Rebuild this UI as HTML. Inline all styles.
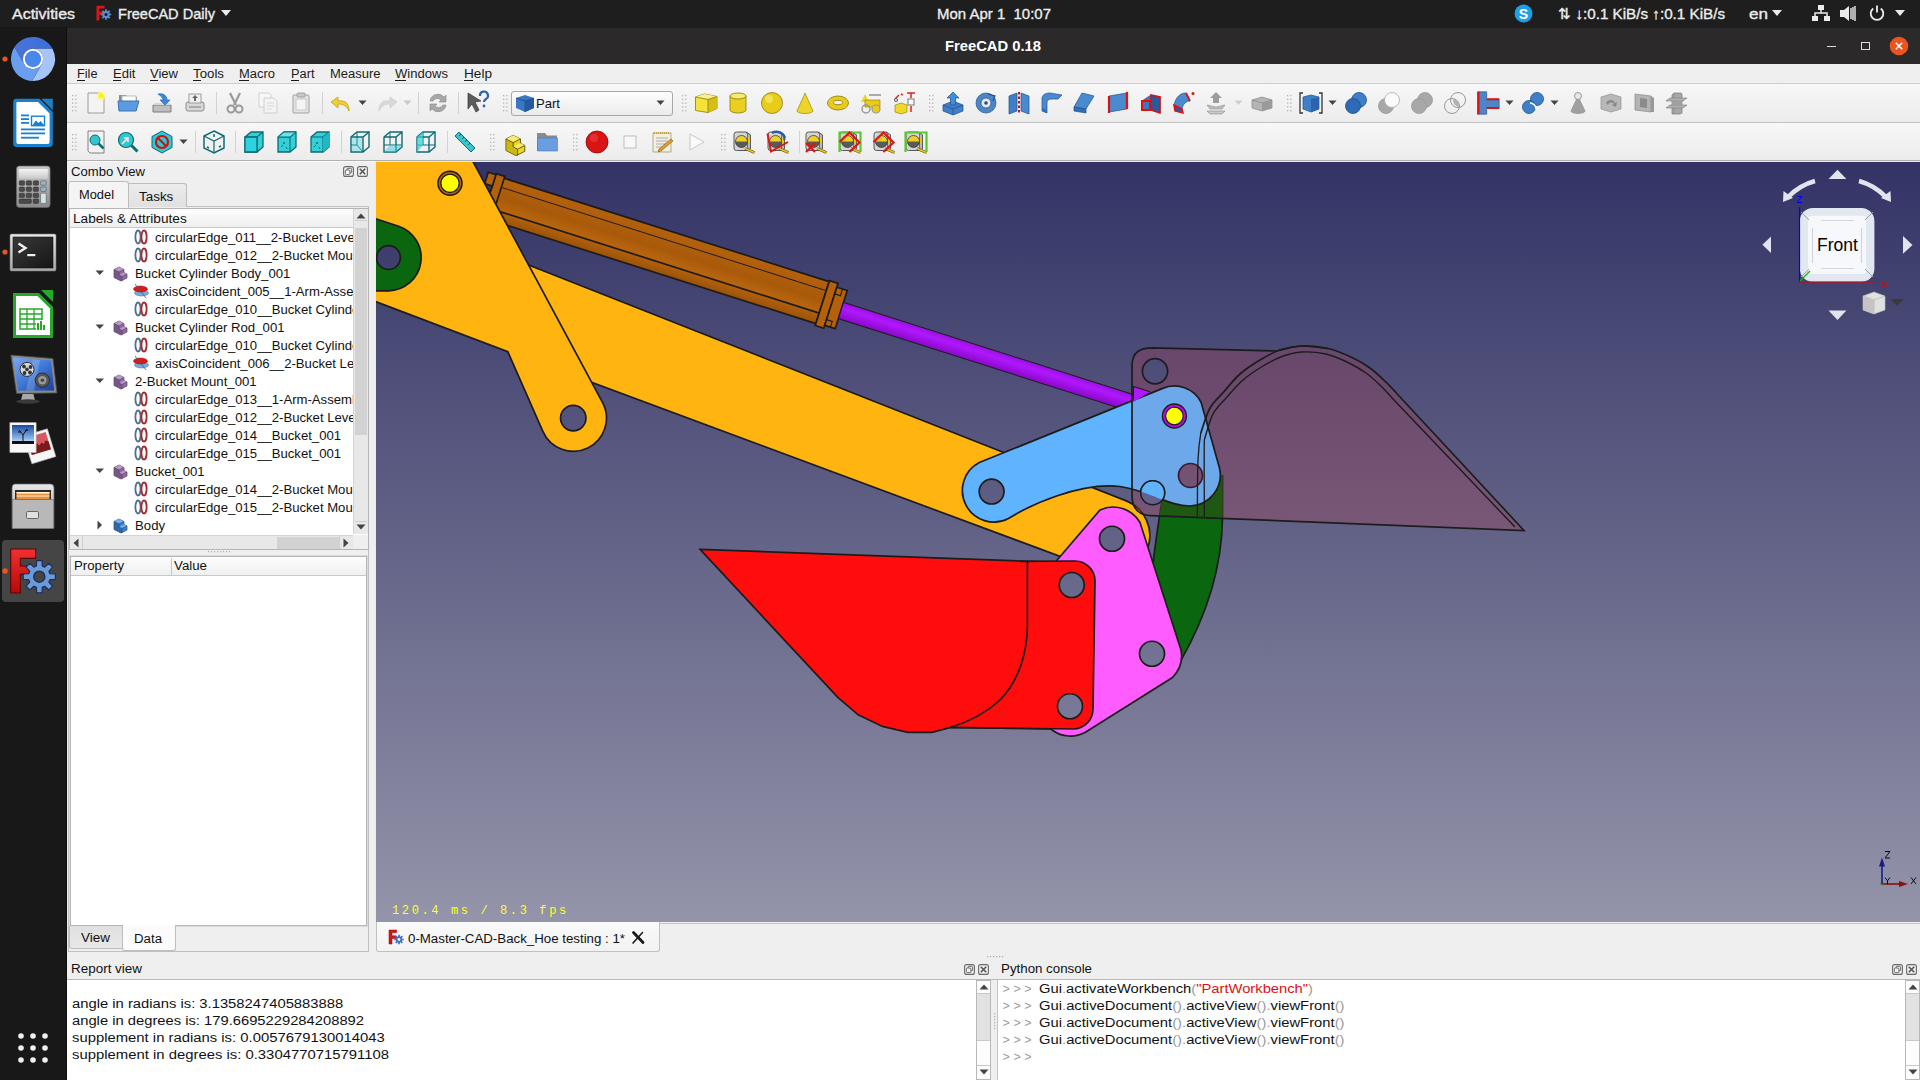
<!DOCTYPE html>
<html><head><meta charset="utf-8">
<style>
html,body{margin:0;padding:0;}
body{width:1920px;height:1080px;overflow:hidden;position:relative;background:#1b1b1b;font-family:"Liberation Sans", sans-serif;}
.t{position:absolute;white-space:pre;line-height:1;transform-origin:0 0;}
.r{position:absolute;}
svg{position:absolute;overflow:visible;}
</style></head><body>

<div class="r" style="left:0px;top:0px;width:1920px;height:28px;background:#1e1e1e;"></div>
<div class="r" style="left:0px;top:27px;width:66px;height:1053px;background:#181818;"></div>
<div class="r" style="left:66px;top:27px;width:1px;height:1053px;background:#0e0e0e;"></div>
<div class="r" style="left:67px;top:28px;width:1853px;height:36px;background:#2b292a;"></div>
<div class="r" style="left:67px;top:64px;width:1853px;height:1016px;background:#efefef;"></div>
<div class="t" id="f0" style="left:12.00px;top:6.30px;font-size:15px;color:#ececec;transform:scaleX(1.0644);-webkit-text-stroke:0.35px #ececec;">Activities</div>
<svg style="left:95px;top:5px;" width="18" height="18" viewBox="0 0 18 18"><path d="M1.5 0.7h8v2.8H4.3v3.2h4v2.8h-4V15.5H1.5z" fill="#d81818"/><polygon points="16.23,8.63 16.23,10.37 14.57,10.48 14.21,11.33 15.31,12.58 14.08,13.81 12.83,12.71 11.98,13.07 11.87,14.73 10.13,14.73 10.02,13.07 9.17,12.71 7.92,13.81 6.69,12.58 7.79,11.33 7.43,10.48 5.77,10.37 5.77,8.63 7.43,8.52 7.79,7.67 6.69,6.42 7.92,5.19 9.17,6.29 10.02,5.93 10.13,4.27 11.87,4.27 11.98,5.93 12.83,6.29 14.08,5.19 15.31,6.42 14.21,7.67 14.57,8.52" fill="#5a8ad0"/><circle cx="11" cy="9.5" r="1.60" fill="#1e1e1e"/></svg>
<div class="t" id="f1" style="left:118.00px;top:6.30px;font-size:15px;color:#ececec;transform:scaleX(0.9697);-webkit-text-stroke:0.35px #ececec;">FreeCAD Daily</div>
<svg style="left:221px;top:10px;" width="11" height="7" viewBox="0 0 11 7"><path d="M0 0h10L5 6z" fill="#ececec"/></svg>
<div class="t" id="f2" style="left:937.00px;top:6.30px;font-size:15px;color:#ececec;transform:scaleX(0.9978);-webkit-text-stroke:0.35px #ececec;">Mon Apr 1  10:07</div>
<svg style="left:1514px;top:4px;" width="19" height="19" viewBox="0 0 19 19"><circle cx="9.5" cy="9.5" r="9" fill="#1ea0e6"/><text x="9.5" y="15" font-family="Liberation Sans" font-weight="bold" font-size="14" fill="#fff" text-anchor="middle">S</text></svg>
<div class="t" id="f3" style="left:1558.00px;top:6.30px;font-size:15px;color:#ececec;transform:scaleX(1.0138);-webkit-text-stroke:0.35px #ececec;">⇅ ↓:0.1 KiB/s ↑:0.1 KiB/s</div>
<div class="t" id="f4" style="left:1749.00px;top:6.30px;font-size:15px;color:#ececec;transform:scaleX(1.1386);-webkit-text-stroke:0.35px #ececec;">en</div>
<svg style="left:1772px;top:10px;" width="11" height="7" viewBox="0 0 11 7"><path d="M0 0h10L5 6z" fill="#ececec"/></svg>
<svg style="left:1812px;top:5px;" width="18" height="17" viewBox="0 0 18 17"><rect x="6" y="0" width="6" height="5" fill="#ececec"/><rect x="0" y="11" width="6" height="5" fill="#ececec"/><rect x="12" y="11" width="6" height="5" fill="#ececec"/><path d="M9 5v3M3 11V8h12v3" stroke="#ececec" stroke-width="1.5" fill="none"/></svg>
<svg style="left:1840px;top:5px;" width="17" height="17" viewBox="0 0 17 17"><path d="M0 5h4l5-4v15l-5-4H0z" fill="#ececec"/><path d="M11 3v11M13 2v13M15 1v15" stroke="#ececec" stroke-width="1.4"/></svg>
<svg style="left:1869px;top:5px;" width="16" height="16" viewBox="0 0 16 16"><path d="M4.2 3.5A6.3 6.3 0 1 0 11.8 3.5" fill="none" stroke="#ececec" stroke-width="1.8"/><path d="M8 0.5v7" stroke="#ececec" stroke-width="1.8"/></svg>
<svg style="left:1895px;top:10px;" width="11" height="7" viewBox="0 0 11 7"><path d="M0 0h10L5 6z" fill="#ececec"/></svg>
<div class="t" id="f5" style="left:945.00px;top:39.03px;font-size:14.5px;color:#ffffff;font-weight:bold;transform:scaleX(1.0181);">FreeCAD 0.18</div>
<div class="r" style="left:1827px;top:45.5px;width:9px;height:1.5px;background:#dcdcdc;"></div>
<div class="r" style="left:1861px;top:42px;width:7px;height:6px;border:1.5px solid #dcdcdc"></div>
<svg style="left:1889px;top:36px;" width="20" height="20" viewBox="0 0 20 20"><circle cx="10" cy="10" r="9.3" fill="#e95420"/><path d="M6.8 6.8l6.4 6.4M13.2 6.8l-6.4 6.4" stroke="#fff" stroke-width="1.5"/></svg>
<svg style="left:9px;top:35px;" width="48" height="48" viewBox="0 0 48 48"><defs><linearGradient id="chtop" x1="0" y1="0" x2="1" y2="0"><stop offset="0" stop-color="#4a74d8"/><stop offset="1" stop-color="#3a6fd8"/></linearGradient></defs>
<path d="M24 13.8L43.49 13.8A22 22 0 0 0 5.42 12.22L15.17 29.1A10.2 10.2 0 0 1 24 13.8Z" fill="url(#chtop)"/>
<path d="M43.49 13.8A22 22 0 0 1 23.08 45.98L32.83 29.1A10.2 10.2 0 0 0 24 13.8Z" fill="#a6c4f7"/>
<path d="M5.42 12.22A22 22 0 0 0 23.08 45.98L32.83 29.1A10.2 10.2 0 0 1 15.17 29.1Z" fill="#6a9ef0"/>
<circle cx="24" cy="24" r="10.2" fill="#fff"/><circle cx="24" cy="24" r="8.2" fill="#4787ee"/></svg>
<svg style="left:2px;top:56px;" width="6" height="6" viewBox="0 0 6 6"><circle cx="3" cy="3" r="2.6" fill="#e95420"/></svg>
<svg style="left:2px;top:249px;" width="6" height="6" viewBox="0 0 6 6"><circle cx="3" cy="3" r="2.6" fill="#e95420"/></svg>
<svg style="left:12px;top:98px;" width="42" height="50" viewBox="0 0 42 50"><path d="M4 0.8H27.5L40.8 14.1V45.5Q40.8 49.1 37.2 49.1H4.8Q1.2 49.1 1.2 45.5V4.4Q1.2 0.8 4 0.8z" fill="#1b80cc"/>
<path d="M5 4H26L37.6 15.6V44Q37.6 46 35.6 46H6Q4.4 46 4.4 44V5.6Q4.4 4 5 4z" fill="#fff"/>
<path d="M29.3 0.8H40.8V12.2z" fill="#1b80cc"/>
<rect x="9" y="16.5" width="8" height="1.8" fill="#1b80cc"/><rect x="9" y="20.2" width="8" height="1.8" fill="#1b80cc"/><rect x="9" y="24" width="8" height="1.8" fill="#1b80cc"/>
<rect x="19.5" y="18.2" width="13" height="9.5" fill="none" stroke="#1b80cc" stroke-width="1.4"/><path d="M20.5 27l3.5-4.5 2.5 2.5 2-2 3.5 4z" fill="#1b80cc"/>
<rect x="9" y="30.5" width="24" height="1.8" fill="#1b80cc"/><rect x="9" y="34.5" width="24" height="1.8" fill="#1b80cc"/><rect x="9" y="38.8" width="18" height="1.8" fill="#1b80cc"/></svg>
<svg style="left:16px;top:165px;" width="35" height="43" viewBox="0 0 35 43"><defs><linearGradient id="cbody" x1="0" y1="0" x2="0" y2="1"><stop offset="0" stop-color="#c8c8c8"/><stop offset="1" stop-color="#8a8a8a"/></linearGradient><linearGradient id="cscr" x1="0" y1="0" x2="0" y2="1"><stop offset="0" stop-color="#f4f4f4"/><stop offset="1" stop-color="#c8c8c8"/></linearGradient></defs>
<rect x="0.5" y="1" width="33.6" height="41.5" rx="3" fill="url(#cbody)" stroke="#666" stroke-width="0.7"/>
<rect x="2.8" y="4" width="29" height="9.8" rx="1" fill="url(#cscr)"/><rect x="3.2" y="15.8" width="5.4" height="4.4" rx="1" fill="#4a4a4a" stroke="#222" stroke-width="0.4"/><rect x="10.2" y="15.8" width="5.4" height="4.4" rx="1" fill="#4a4a4a" stroke="#222" stroke-width="0.4"/><rect x="17.2" y="15.8" width="5.4" height="4.4" rx="1" fill="#4a4a4a" stroke="#222" stroke-width="0.4"/><rect x="3.2" y="22" width="5.4" height="4.4" rx="1" fill="#4a4a4a" stroke="#222" stroke-width="0.4"/><rect x="10.2" y="22" width="5.4" height="4.4" rx="1" fill="#4a4a4a" stroke="#222" stroke-width="0.4"/><rect x="17.2" y="22" width="5.4" height="4.4" rx="1" fill="#4a4a4a" stroke="#222" stroke-width="0.4"/><rect x="3.2" y="28.2" width="5.4" height="4.4" rx="1" fill="#4a4a4a" stroke="#222" stroke-width="0.4"/><rect x="10.2" y="28.2" width="5.4" height="4.4" rx="1" fill="#4a4a4a" stroke="#222" stroke-width="0.4"/><rect x="17.2" y="28.2" width="5.4" height="4.4" rx="1" fill="#4a4a4a" stroke="#222" stroke-width="0.4"/><rect x="3.2" y="34" width="12.2" height="4.4" rx="1" fill="#4a4a4a" stroke="#222" stroke-width="0.4"/><rect x="17.2" y="34" width="5.4" height="4.4" rx="1" fill="#4a4a4a" stroke="#222" stroke-width="0.4"/><rect x="24.6" y="15.8" width="5.6" height="4.4" rx="1" fill="#9ab4c4" stroke="#333" stroke-width="0.4"/><rect x="24.6" y="22" width="5.6" height="4.4" rx="1" fill="#9ab4c4" stroke="#333" stroke-width="0.4"/><rect x="24.6" y="28.2" width="5.6" height="10.2" rx="1" fill="#d4e2ea" stroke="#333" stroke-width="0.4"/></svg>
<svg style="left:9px;top:233px;" width="48" height="39" viewBox="0 0 48 39"><defs><linearGradient id="tfr" x1="0" y1="0" x2="0" y2="1"><stop offset="0" stop-color="#e8e8e8"/><stop offset="1" stop-color="#a8a8a8"/></linearGradient><linearGradient id="tin" x1="0" y1="0" x2="1" y2="1"><stop offset="0" stop-color="#3a3a3a"/><stop offset="1" stop-color="#151515"/></linearGradient></defs>
<rect x="1" y="1" width="46" height="37" rx="1.5" fill="url(#tfr)" stroke="#777" stroke-width="0.6"/><rect x="4" y="4" width="40" height="31" fill="url(#tin)" stroke="#111" stroke-width="0.6"/>
<path d="M9.5 10.5l7 4.5-7 4.5" fill="none" stroke="#f0f0f0" stroke-width="2.4"/><rect x="18.3" y="21" width="8" height="2.2" fill="#f0f0f0"/></svg>
<svg style="left:12px;top:290px;" width="42" height="49" viewBox="0 0 42 49"><path d="M1 3h26l14 14v31H1z" fill="#25a929"/><path d="M4 6h21.5L38 18.5V45H4z" fill="#fff"/>
<path d="M29 0h12v12z" fill="#25a929"/>
<rect x="8" y="19" width="22" height="20" fill="none" stroke="#25a929" stroke-width="1.5"/>
<path d="M8 24h22M8 29h22M8 34h22M15 19v20M22 19v20" stroke="#25a929" stroke-width="1.3"/>
<rect x="24" y="30" width="9" height="11" fill="#fff"/><rect x="25" y="33" width="2" height="7" fill="#25a929"/><rect x="28" y="31" width="2" height="9" fill="#25a929"/><rect x="31" y="35" width="2" height="5" fill="#25a929"/></svg>
<svg style="left:0px;top:345px;" width="67" height="65" viewBox="0 0 67 65"><defs><linearGradient id="mscr" x1="0" y1="0" x2="1" y2="1"><stop offset="0" stop-color="#7aa8f0"/><stop offset="0.5" stop-color="#3f78d8"/><stop offset="1" stop-color="#1a3f9a"/></linearGradient></defs>
<path d="M10.8 10L53 13.5 57 48 16.5 48.5z" fill="#8a8a8a" stroke="#444" stroke-width="0.8"/>
<path d="M13.2 12.6L51 15.6 54.2 45.5 18 45.8z" fill="url(#mscr)"/>
<path d="M33 14.5L40 15 34 45.5 26 45.6z" fill="#ffffff" opacity="0.18"/>
<circle cx="27" cy="24.4" r="7" fill="#d8d8d8" stroke="#333" stroke-width="1"/><circle cx="27" cy="24.4" r="1.8" fill="#333"/>
<circle cx="24" cy="21.5" r="1.9" fill="#333"/><circle cx="30.5" cy="22" r="1.9" fill="#333"/><circle cx="24.5" cy="28" r="1.9" fill="#333"/><circle cx="30" cy="27.5" r="1.9" fill="#333"/>
<circle cx="42.4" cy="35.2" r="7.2" fill="#555" stroke="#222" stroke-width="0.8"/><circle cx="42.4" cy="35.2" r="4.2" fill="#9a9a9a"/><circle cx="42.4" cy="35.2" r="1.8" fill="#444"/>
<path d="M22.6 49h10.8l1.5 6H21z" fill="#a8a8a8"/><ellipse cx="28" cy="56.5" rx="12" ry="2.2" fill="#3a3a3a"/></svg>
<svg style="left:0px;top:415px;" width="67" height="60" viewBox="0 0 67 60"><defs><linearGradient id="sky" x1="0" y1="0" x2="0" y2="1"><stop offset="0" stop-color="#1a4aa0"/><stop offset="0.7" stop-color="#8ab4e8"/><stop offset="1" stop-color="#e8f0ff"/></linearGradient></defs>
<g transform="translate(-2 4) rotate(-17 41 27)"><rect x="29" y="13" width="25" height="29" fill="#f6f6f6" stroke="#bbb" stroke-width="0.6"/><rect x="31.5" y="15.5" width="20" height="18" fill="#d65a62"/><path d="M31.5 33.5v-7l3-1 2 2 3-4 2 3 3-2 2 2 2-3 3 2v8z" fill="#7a1a1a"/></g>
<rect x="9.9" y="7.7" width="26.2" height="29.8" fill="#f8f8f8" stroke="#bbb" stroke-width="0.6"/><rect x="12" y="10" width="22" height="19" fill="url(#sky)"/><rect x="12" y="26" width="22" height="3" fill="#111"/>
<path d="M23 27v-7M23 20l-4-5M23 20l4-6M21 17l-3 0M25 16l3-1" stroke="#111" stroke-width="1" fill="none"/></svg>
<svg style="left:0px;top:480px;" width="67" height="52" viewBox="0 0 67 52"><defs><linearGradient id="cab" x1="0" y1="0" x2="0" y2="1"><stop offset="0" stop-color="#e8e8e8"/><stop offset="1" stop-color="#9a9a9a"/></linearGradient></defs>
<path d="M12 8Q12 4 15 4H50.5Q54 4 54 8V48H12z" fill="url(#cab)" stroke="#6a6a6a" stroke-width="0.7"/>
<rect x="15" y="10" width="36" height="10" fill="#2a2a2a"/>
<rect x="16.5" y="12" width="33" height="7" fill="#e89040"/><rect x="16.5" y="12" width="33" height="1.6" fill="#fff3d0"/><rect x="16.5" y="15.5" width="33" height="1" fill="#fff3d0"/>
<rect x="12.5" y="19.5" width="41" height="29" fill="#b8b8b8" stroke="#777" stroke-width="0.7"/>
<rect x="26.5" y="31.5" width="12" height="7" rx="1.2" fill="#e0e0e0" stroke="#666" stroke-width="1"/></svg>
<div class="r" style="left:2px;top:540px;width:62px;height:62px;background:#454545;border-radius:4px"></div>
<svg style="left:0px;top:530px;" width="67" height="80" viewBox="0 0 67 80"><defs><linearGradient id="fr" x1="0" y1="0" x2="0" y2="1"><stop offset="0" stop-color="#f03030"/><stop offset="1" stop-color="#b80808"/></linearGradient></defs><path d="M10.7 19H35.6V28.4H20.4V36H29.3V44.4H20.4V63H10.7z" fill="url(#fr)" stroke="#5a0404" stroke-width="1.1"/><polygon points="55.38,44.02 55.38,49.38 49.91,49.60 48.85,52.15 52.56,56.18 48.78,59.96 44.75,56.25 42.20,57.31 41.98,62.78 36.62,62.78 36.40,57.31 33.85,56.25 29.82,59.96 26.04,56.18 29.75,52.15 28.69,49.60 23.22,49.38 23.22,44.02 28.69,43.80 29.75,41.25 26.04,37.22 29.82,33.44 33.85,37.15 36.40,36.09 36.62,30.62 41.98,30.62 42.20,36.09 44.75,37.15 48.78,33.44 52.56,37.22 48.85,41.25 49.91,43.80" fill="#6a9ad8" stroke="#1a2a5a" stroke-width="1.1" stroke-linejoin="round"/><circle cx="39.3" cy="46.7" r="5.6" fill="#454545" stroke="#1a2a5a" stroke-width="1.3"/></svg>
<svg style="left:2px;top:568px;" width="6" height="6" viewBox="0 0 6 6"><circle cx="3" cy="3" r="2.8" fill="#e95420"/></svg>
<svg style="left:18px;top:1033px;" width="6" height="6" viewBox="0 0 6 6"><circle cx="3" cy="3" r="2.8" fill="#f0f0f0"/></svg>
<svg style="left:30px;top:1033px;" width="6" height="6" viewBox="0 0 6 6"><circle cx="3" cy="3" r="2.8" fill="#f0f0f0"/></svg>
<svg style="left:42px;top:1033px;" width="6" height="6" viewBox="0 0 6 6"><circle cx="3" cy="3" r="2.8" fill="#f0f0f0"/></svg>
<svg style="left:18px;top:1045px;" width="6" height="6" viewBox="0 0 6 6"><circle cx="3" cy="3" r="2.8" fill="#f0f0f0"/></svg>
<svg style="left:30px;top:1045px;" width="6" height="6" viewBox="0 0 6 6"><circle cx="3" cy="3" r="2.8" fill="#f0f0f0"/></svg>
<svg style="left:42px;top:1045px;" width="6" height="6" viewBox="0 0 6 6"><circle cx="3" cy="3" r="2.8" fill="#f0f0f0"/></svg>
<svg style="left:18px;top:1057px;" width="6" height="6" viewBox="0 0 6 6"><circle cx="3" cy="3" r="2.8" fill="#f0f0f0"/></svg>
<svg style="left:30px;top:1057px;" width="6" height="6" viewBox="0 0 6 6"><circle cx="3" cy="3" r="2.8" fill="#f0f0f0"/></svg>
<svg style="left:42px;top:1057px;" width="6" height="6" viewBox="0 0 6 6"><circle cx="3" cy="3" r="2.8" fill="#f0f0f0"/></svg>
<div class="r" style="left:67px;top:64px;width:1853px;height:20px;background:#efefef;"></div>
<div class="t" id="f6" style="left:77.00px;top:67.92px;font-size:12.5px;color:#1a1a1a;transform:scaleX(1.0171);">File</div>
<div class="t" id="f7" style="left:112.50px;top:67.92px;font-size:12.5px;color:#1a1a1a;transform:scaleX(1.0442);">Edit</div>
<div class="t" id="f8" style="left:150.00px;top:67.92px;font-size:12.5px;color:#1a1a1a;transform:scaleX(1.0419);">View</div>
<div class="t" id="f9" style="left:193.00px;top:67.92px;font-size:12.5px;color:#1a1a1a;transform:scaleX(1.0621);">Tools</div>
<div class="t" id="f10" style="left:239.25px;top:67.92px;font-size:12.5px;color:#1a1a1a;transform:scaleX(1.0364);">Macro</div>
<div class="t" id="f11" style="left:290.50px;top:67.92px;font-size:12.5px;color:#1a1a1a;transform:scaleX(1.0245);">Part</div>
<div class="t" id="f12" style="left:329.50px;top:67.92px;font-size:12.5px;color:#1a1a1a;transform:scaleX(1.0382);">Measure</div>
<div class="t" id="f13" style="left:395.00px;top:67.92px;font-size:12.5px;color:#1a1a1a;transform:scaleX(1.0450);">Windows</div>
<div class="t" id="f14" style="left:463.75px;top:67.92px;font-size:12.5px;color:#1a1a1a;transform:scaleX(1.0887);">Help</div>
<div class="r" style="left:77px;top:80px;width:8px;height:1px;background:#1a1a1a;"></div>
<div class="r" style="left:112.5px;top:80px;width:8px;height:1px;background:#1a1a1a;"></div>
<div class="r" style="left:150px;top:80px;width:8px;height:1px;background:#1a1a1a;"></div>
<div class="r" style="left:193px;top:80px;width:8px;height:1px;background:#1a1a1a;"></div>
<div class="r" style="left:239.25px;top:80px;width:10px;height:1px;background:#1a1a1a;"></div>
<div class="r" style="left:290.5px;top:80px;width:8px;height:1px;background:#1a1a1a;"></div>
<div class="r" style="left:395px;top:80px;width:11px;height:1px;background:#1a1a1a;"></div>
<div class="r" style="left:463.75px;top:80px;width:9px;height:1px;background:#1a1a1a;"></div>
<div class="r" style="left:67px;top:84px;width:1853px;height:38px;background:linear-gradient(#f7f7f7,#ececec)"></div>
<div class="r" style="left:67px;top:122px;width:1853px;height:1px;background:#c4c4c4;"></div>
<div class="r" style="left:67px;top:83px;width:1853px;height:1px;background:#cdcdcd;"></div>
<div class="r" style="left:67px;top:123px;width:1853px;height:37px;background:linear-gradient(#f7f7f7,#ececec)"></div>
<div class="r" style="left:67px;top:160px;width:1853px;height:1px;background:#b0b0b0;"></div>
<div class="r" style="left:67px;top:161px;width:1853px;height:1px;background:#fbfbfb;"></div>
<svg style="left:72px;top:94.75px;" width="6" height="18" viewBox="0 0 6 18"><rect x="0.0" y="0.00" width="1.3" height="1.3" fill="#b4b4b4"/><rect x="3.2" y="0.00" width="1.3" height="1.3" fill="#b4b4b4"/><rect x="0.0" y="3.75" width="1.3" height="1.3" fill="#b4b4b4"/><rect x="3.2" y="3.75" width="1.3" height="1.3" fill="#b4b4b4"/><rect x="0.0" y="7.50" width="1.3" height="1.3" fill="#b4b4b4"/><rect x="3.2" y="7.50" width="1.3" height="1.3" fill="#b4b4b4"/><rect x="0.0" y="11.25" width="1.3" height="1.3" fill="#b4b4b4"/><rect x="3.2" y="11.25" width="1.3" height="1.3" fill="#b4b4b4"/><rect x="0.0" y="15.00" width="1.3" height="1.3" fill="#b4b4b4"/><rect x="3.2" y="15.00" width="1.3" height="1.3" fill="#b4b4b4"/></svg>
<svg style="left:502.5px;top:94.75px;" width="6" height="18" viewBox="0 0 6 18"><rect x="0.0" y="0.00" width="1.3" height="1.3" fill="#b4b4b4"/><rect x="3.2" y="0.00" width="1.3" height="1.3" fill="#b4b4b4"/><rect x="0.0" y="3.75" width="1.3" height="1.3" fill="#b4b4b4"/><rect x="3.2" y="3.75" width="1.3" height="1.3" fill="#b4b4b4"/><rect x="0.0" y="7.50" width="1.3" height="1.3" fill="#b4b4b4"/><rect x="3.2" y="7.50" width="1.3" height="1.3" fill="#b4b4b4"/><rect x="0.0" y="11.25" width="1.3" height="1.3" fill="#b4b4b4"/><rect x="3.2" y="11.25" width="1.3" height="1.3" fill="#b4b4b4"/><rect x="0.0" y="15.00" width="1.3" height="1.3" fill="#b4b4b4"/><rect x="3.2" y="15.00" width="1.3" height="1.3" fill="#b4b4b4"/></svg>
<svg style="left:682px;top:94.75px;" width="6" height="18" viewBox="0 0 6 18"><rect x="0.0" y="0.00" width="1.3" height="1.3" fill="#b4b4b4"/><rect x="3.2" y="0.00" width="1.3" height="1.3" fill="#b4b4b4"/><rect x="0.0" y="3.75" width="1.3" height="1.3" fill="#b4b4b4"/><rect x="3.2" y="3.75" width="1.3" height="1.3" fill="#b4b4b4"/><rect x="0.0" y="7.50" width="1.3" height="1.3" fill="#b4b4b4"/><rect x="3.2" y="7.50" width="1.3" height="1.3" fill="#b4b4b4"/><rect x="0.0" y="11.25" width="1.3" height="1.3" fill="#b4b4b4"/><rect x="3.2" y="11.25" width="1.3" height="1.3" fill="#b4b4b4"/><rect x="0.0" y="15.00" width="1.3" height="1.3" fill="#b4b4b4"/><rect x="3.2" y="15.00" width="1.3" height="1.3" fill="#b4b4b4"/></svg>
<svg style="left:928.5px;top:94.75px;" width="6" height="18" viewBox="0 0 6 18"><rect x="0.0" y="0.00" width="1.3" height="1.3" fill="#b4b4b4"/><rect x="3.2" y="0.00" width="1.3" height="1.3" fill="#b4b4b4"/><rect x="0.0" y="3.75" width="1.3" height="1.3" fill="#b4b4b4"/><rect x="3.2" y="3.75" width="1.3" height="1.3" fill="#b4b4b4"/><rect x="0.0" y="7.50" width="1.3" height="1.3" fill="#b4b4b4"/><rect x="3.2" y="7.50" width="1.3" height="1.3" fill="#b4b4b4"/><rect x="0.0" y="11.25" width="1.3" height="1.3" fill="#b4b4b4"/><rect x="3.2" y="11.25" width="1.3" height="1.3" fill="#b4b4b4"/><rect x="0.0" y="15.00" width="1.3" height="1.3" fill="#b4b4b4"/><rect x="3.2" y="15.00" width="1.3" height="1.3" fill="#b4b4b4"/></svg>
<svg style="left:1286.75px;top:94.75px;" width="6" height="18" viewBox="0 0 6 18"><rect x="0.0" y="0.00" width="1.3" height="1.3" fill="#b4b4b4"/><rect x="3.2" y="0.00" width="1.3" height="1.3" fill="#b4b4b4"/><rect x="0.0" y="3.75" width="1.3" height="1.3" fill="#b4b4b4"/><rect x="3.2" y="3.75" width="1.3" height="1.3" fill="#b4b4b4"/><rect x="0.0" y="7.50" width="1.3" height="1.3" fill="#b4b4b4"/><rect x="3.2" y="7.50" width="1.3" height="1.3" fill="#b4b4b4"/><rect x="0.0" y="11.25" width="1.3" height="1.3" fill="#b4b4b4"/><rect x="3.2" y="11.25" width="1.3" height="1.3" fill="#b4b4b4"/><rect x="0.0" y="15.00" width="1.3" height="1.3" fill="#b4b4b4"/><rect x="3.2" y="15.00" width="1.3" height="1.3" fill="#b4b4b4"/></svg>
<div class="r" style="left:215.75px;top:91.75px;width:1px;height:22px;background:#d2d2d2;"></div>
<div class="r" style="left:322px;top:91.75px;width:1px;height:22px;background:#d2d2d2;"></div>
<div class="r" style="left:418px;top:91.75px;width:1px;height:22px;background:#d2d2d2;"></div>
<div class="r" style="left:458px;top:91.75px;width:1px;height:22px;background:#d2d2d2;"></div>
<svg style="left:72px;top:133.5px;" width="6" height="18" viewBox="0 0 6 18"><rect x="0.0" y="0.00" width="1.3" height="1.3" fill="#b4b4b4"/><rect x="3.2" y="0.00" width="1.3" height="1.3" fill="#b4b4b4"/><rect x="0.0" y="3.75" width="1.3" height="1.3" fill="#b4b4b4"/><rect x="3.2" y="3.75" width="1.3" height="1.3" fill="#b4b4b4"/><rect x="0.0" y="7.50" width="1.3" height="1.3" fill="#b4b4b4"/><rect x="3.2" y="7.50" width="1.3" height="1.3" fill="#b4b4b4"/><rect x="0.0" y="11.25" width="1.3" height="1.3" fill="#b4b4b4"/><rect x="3.2" y="11.25" width="1.3" height="1.3" fill="#b4b4b4"/><rect x="0.0" y="15.00" width="1.3" height="1.3" fill="#b4b4b4"/><rect x="3.2" y="15.00" width="1.3" height="1.3" fill="#b4b4b4"/></svg>
<svg style="left:490px;top:133.5px;" width="6" height="18" viewBox="0 0 6 18"><rect x="0.0" y="0.00" width="1.3" height="1.3" fill="#b4b4b4"/><rect x="3.2" y="0.00" width="1.3" height="1.3" fill="#b4b4b4"/><rect x="0.0" y="3.75" width="1.3" height="1.3" fill="#b4b4b4"/><rect x="3.2" y="3.75" width="1.3" height="1.3" fill="#b4b4b4"/><rect x="0.0" y="7.50" width="1.3" height="1.3" fill="#b4b4b4"/><rect x="3.2" y="7.50" width="1.3" height="1.3" fill="#b4b4b4"/><rect x="0.0" y="11.25" width="1.3" height="1.3" fill="#b4b4b4"/><rect x="3.2" y="11.25" width="1.3" height="1.3" fill="#b4b4b4"/><rect x="0.0" y="15.00" width="1.3" height="1.3" fill="#b4b4b4"/><rect x="3.2" y="15.00" width="1.3" height="1.3" fill="#b4b4b4"/></svg>
<svg style="left:572.5px;top:133.5px;" width="6" height="18" viewBox="0 0 6 18"><rect x="0.0" y="0.00" width="1.3" height="1.3" fill="#b4b4b4"/><rect x="3.2" y="0.00" width="1.3" height="1.3" fill="#b4b4b4"/><rect x="0.0" y="3.75" width="1.3" height="1.3" fill="#b4b4b4"/><rect x="3.2" y="3.75" width="1.3" height="1.3" fill="#b4b4b4"/><rect x="0.0" y="7.50" width="1.3" height="1.3" fill="#b4b4b4"/><rect x="3.2" y="7.50" width="1.3" height="1.3" fill="#b4b4b4"/><rect x="0.0" y="11.25" width="1.3" height="1.3" fill="#b4b4b4"/><rect x="3.2" y="11.25" width="1.3" height="1.3" fill="#b4b4b4"/><rect x="0.0" y="15.00" width="1.3" height="1.3" fill="#b4b4b4"/><rect x="3.2" y="15.00" width="1.3" height="1.3" fill="#b4b4b4"/></svg>
<svg style="left:720.5px;top:133.5px;" width="6" height="18" viewBox="0 0 6 18"><rect x="0.0" y="0.00" width="1.3" height="1.3" fill="#b4b4b4"/><rect x="3.2" y="0.00" width="1.3" height="1.3" fill="#b4b4b4"/><rect x="0.0" y="3.75" width="1.3" height="1.3" fill="#b4b4b4"/><rect x="3.2" y="3.75" width="1.3" height="1.3" fill="#b4b4b4"/><rect x="0.0" y="7.50" width="1.3" height="1.3" fill="#b4b4b4"/><rect x="3.2" y="7.50" width="1.3" height="1.3" fill="#b4b4b4"/><rect x="0.0" y="11.25" width="1.3" height="1.3" fill="#b4b4b4"/><rect x="3.2" y="11.25" width="1.3" height="1.3" fill="#b4b4b4"/><rect x="0.0" y="15.00" width="1.3" height="1.3" fill="#b4b4b4"/><rect x="3.2" y="15.00" width="1.3" height="1.3" fill="#b4b4b4"/></svg>
<div class="r" style="left:194.5px;top:130.5px;width:1px;height:22px;background:#d2d2d2;"></div>
<div class="r" style="left:234.5px;top:130.5px;width:1px;height:22px;background:#d2d2d2;"></div>
<div class="r" style="left:341px;top:130.5px;width:1px;height:22px;background:#d2d2d2;"></div>
<div class="r" style="left:446.5px;top:130.5px;width:1px;height:22px;background:#d2d2d2;"></div>
<div class="r" style="left:798.75px;top:130.5px;width:1px;height:22px;background:#d2d2d2;"></div>
<svg style="left:83.75px;top:90.75px;" width="24" height="24" viewBox="0 0 24 24"><path d="M4 2h13l3 3v17H4z" fill="#f4f4f4" stroke="#9a9a9a"/><circle cx="17" cy="5" r="4.5" fill="#ffff60" opacity="0.7"/><circle cx="17" cy="5" r="2.5" fill="#ffef20"/></svg>
<svg style="left:117.0px;top:90.75px;" width="24" height="24" viewBox="0 0 24 24"><path d="M2 4h7l2 2h9v14H2z" fill="#8c8c8c"/><rect x="5" y="5" width="14" height="10" fill="#fff" stroke="#bbb"/><path d="M1 10h21l-3 10H2z" fill="#5b9be0" stroke="#3a72b8"/></svg>
<svg style="left:150.0px;top:90.75px;" width="24" height="24" viewBox="0 0 24 24"><path d="M3 14h18v7H3z" fill="#bfbfbf" stroke="#7c7c7c"/><path d="M5 12h14l2 2H3z" fill="#d6d6d6"/><path d="M8 3c6-1 9 2 9 6h3l-5 5-5-5h3c0-2-2-4-5-6z" fill="#3a86d8" stroke="#1d5aa8" stroke-width="0.6"/></svg>
<svg style="left:183.0px;top:90.75px;" width="24" height="24" viewBox="0 0 24 24"><rect x="3" y="11" width="18" height="9" rx="2" fill="#d8d8d8" stroke="#8c8c8c"/><rect x="6" y="3" width="12" height="9" fill="#f0f0f0" stroke="#9c9c9c"/><path d="M12 4l3 3h-2v3h-2V7H9z" fill="#666"/><rect x="6" y="15" width="12" height="2" fill="#aaa"/></svg>
<svg style="left:223.0px;top:90.75px;" width="24" height="24" viewBox="0 0 24 24"><path d="M7 2l6 12M17 2l-6 12" stroke="#9a9a9a" stroke-width="2.2"/><circle cx="8" cy="18" r="3.5" fill="none" stroke="#9a9a9a" stroke-width="2"/><circle cx="16" cy="18" r="3.5" fill="none" stroke="#9a9a9a" stroke-width="2"/></svg>
<svg style="left:255.5px;top:90.75px;" width="24" height="24" viewBox="0 0 24 24"><path d="M3 2h10l2 2v12H3z" fill="#f7f7f7" stroke="#d0d0d0"/><path d="M8 7h10l3 3v12H8z" fill="#f3f3f3" stroke="#cfcfcf"/><path d="M11 12h7M11 15h7M11 18h5" stroke="#dadada"/></svg>
<svg style="left:288.75px;top:90.75px;" width="24" height="24" viewBox="0 0 24 24"><rect x="4" y="4" width="16" height="18" rx="1" fill="#e4e4e4" stroke="#a0a0a0"/><rect x="8" y="2" width="8" height="4" rx="1" fill="#c8c8c8" stroke="#a0a0a0"/><rect x="7" y="8" width="10" height="11" fill="#f5f5f5" stroke="#c8c8c8"/></svg>
<svg style="left:328.75px;top:90.75px;" width="24" height="24" viewBox="0 0 24 24"><path d="M20 20c0-8-4-11-11-10V6L2 11l7 6v-4c5 0 9 2 11 7z" fill="#f0d030" stroke="#c8a010" stroke-width="0.8"/></svg>
<svg style="left:358px;top:99.75px;" width="10" height="6" viewBox="0 0 10 6"><path d="M0.5 0.5h8L4.5 5z" fill="#444"/></svg>
<svg style="left:374.5px;top:90.75px;" width="24" height="24" viewBox="0 0 24 24"><path d="M4 20c0-8 4-11 11-10V6l7 5-7 6v-4c-5 0-9 2-11 7z" fill="#d8d8d8" stroke="#cfcfcf" stroke-width="0.8"/></svg>
<svg style="left:403px;top:99.75px;" width="10" height="6" viewBox="0 0 10 6"><path d="M0.5 0.5h8L4.5 5z" fill="#c8c8c8"/></svg>
<svg style="left:426.0px;top:90.75px;" width="24" height="24" viewBox="0 0 24 24"><path d="M4 10a8 8 0 0 1 14-4l2-2v7h-7l2-2a5 5 0 0 0-8 1z" fill="#a8a8a8" stroke="#888" stroke-width="0.6"/><path d="M20 14a8 8 0 0 1-14 4l-2 2v-7h7l-2 2a5 5 0 0 0 8-1z" fill="#a8a8a8" stroke="#888" stroke-width="0.6"/></svg>
<svg style="left:465.0px;top:90.75px;" width="24" height="24" viewBox="0 0 24 24"><path d="M3 2l13 8-6 1 4 8-3 2-4-8-4 5z" fill="#5c5c5c" stroke="#333" stroke-width="0.7"/><path d="M15 5a4 4 0 1 1 6 3c-1.5 1-2 1.5-2 3" fill="none" stroke="#2d63b0" stroke-width="2.2"/><circle cx="19" cy="15" r="1.4" fill="#2d63b0"/></svg>
<div class="r" style="left:511px;top:91px;width:160px;height:22.5px;border:1px solid #a8a8a8;border-radius:3px;background:linear-gradient(#fdfdfd,#ebebeb)"></div>
<svg style="left:513.0px;top:90.75px;" width="24" height="24" viewBox="0 0 24 24"><path d="M3 7l9-3 9 3v10l-9 4-9-4z" fill="#3a78c4"/><path d="M3 7l9 3 9-3M12 10v11" stroke="#1c4a86" stroke-width="0.8" fill="none"/><path d="M12 10l9-3v10l-9 4z" fill="#245a9c"/></svg>
<div class="t" id="f15" style="left:536.00px;top:96.50px;font-size:13px;color:#111;transform:scaleX(1.0066);">Part</div>
<svg style="left:656px;top:99.75px;" width="10" height="6" viewBox="0 0 10 6"><path d="M0.5 0.5h8L4.5 5z" fill="#444"/></svg>
<svg style="left:693.5px;top:90.75px;" width="24" height="24" viewBox="0 0 24 24"><path d="M1.5 6L10.5 3 23 5.5V17.5L14 21.5 1.5 19.5z" fill="#f5e23a" stroke="#8a7808" stroke-width="0.8" stroke-linejoin="round"/><path d="M1.5 6L10.5 3 23 5.5 14 8.5z" fill="#faf090"/><path d="M14 8.5L23 5.5V17.5L14 21.5z" fill="#d7be14"/><path d="M1.5 6L14 8.5 23 5.5M14 8.5V21.5" stroke="#8a7808" stroke-width="0.8" fill="none"/></svg>
<svg style="left:726.0px;top:90.75px;" width="24" height="24" viewBox="0 0 24 24"><path d="M4 5v14a8 3 0 0 0 16 0V5z" fill="#e8cf20" stroke="#8a7808" stroke-width="0.8"/><ellipse cx="12" cy="5" rx="8" ry="3" fill="#f8ec70" stroke="#8a7808" stroke-width="0.8"/></svg>
<svg style="left:760.0px;top:90.75px;" width="24" height="24" viewBox="0 0 24 24"><circle cx="12" cy="12" r="10.5" fill="#e8cc18" stroke="#8a7808" stroke-width="0.8"/><circle cx="9" cy="8" r="4" fill="#f8ec80" opacity="0.6"/></svg>
<svg style="left:793.0px;top:90.75px;" width="24" height="24" viewBox="0 0 24 24"><path d="M12 2l8 18a8 2.5 0 0 1-16 0z" fill="#eed428" stroke="#8a7808" stroke-width="0.6"/></svg>
<svg style="left:826.0px;top:90.75px;" width="24" height="24" viewBox="0 0 24 24"><ellipse cx="12" cy="12" rx="10.5" ry="7" fill="#e8cc18" stroke="#8a7808" stroke-width="0.8"/><ellipse cx="12" cy="11.5" rx="4.5" ry="2.2" fill="#f2f2f2" stroke="#8a7808" stroke-width="0.8"/></svg>
<svg style="left:858.75px;top:90.75px;" width="24" height="24" viewBox="0 0 24 24"><path d="M4 2l4 8H0z" fill="#eed428" transform="translate(2 1)"/><rect x="10" y="3" width="12" height="2" fill="#aaa"/><rect x="6" y="9" width="15" height="7" fill="#e8cc18" stroke="#8a7808" stroke-width="0.6"/><circle cx="7" cy="18" r="4" fill="none" stroke="#999" stroke-width="1.5"/><circle cx="17" cy="18" r="4" fill="#e8cc18" stroke="#999" stroke-width="1.2"/></svg>
<svg style="left:891.75px;top:90.75px;" width="24" height="24" viewBox="0 0 24 24"><path d="M3 14l6-2 6 2v7l-6 2-6-2z" fill="#f0d828" stroke="#8a7808" stroke-width="0.6"/><rect x="16" y="8" width="6" height="6" fill="#fff" stroke="#777"/><path d="M15 2h8M19 2v5M19 15v6" stroke="#d22" stroke-width="1.5"/><path d="M3 8l4-4M9 3l2 1" stroke="#d22" stroke-width="1.5"/><circle cx="4" cy="9" r="1.5" fill="#fff" stroke="#555"/></svg>
<svg style="left:940.5px;top:90.75px;" width="24" height="24" viewBox="0 0 24 24"><path d="M2 14l10-4 10 4v6l-10 4-10-4z" fill="#3f7fc8" stroke="#1f4f8a" stroke-width="0.7"/><path d="M2 14l10 4 10-4M12 18v6" stroke="#1f4f8a" stroke-width="0.7" fill="none"/><path d="M12 1l6 6h-3.5v7h-5V7H6z" fill="#3f8fe0" stroke="#1f4f8a" stroke-width="0.7"/></svg>
<svg style="left:973.5px;top:90.75px;" width="24" height="24" viewBox="0 0 24 24"><circle cx="12" cy="12" r="10" fill="#4a86c8" stroke="#1f4f8a" stroke-width="0.7"/><circle cx="12" cy="12" r="5" fill="#e8e8e8" stroke="#1f4f8a" stroke-width="0.7"/><circle cx="12" cy="12" r="1.8" fill="#1f4f8a"/><path d="M14 3l7 2-2 5" fill="none" stroke="#1f4f8a" stroke-width="1.2"/></svg>
<svg style="left:1006.75px;top:90.75px;" width="24" height="24" viewBox="0 0 24 24"><path d="M2 5l8-3v18l-8 3z" fill="#3f7fc8" stroke="#1f4f8a" stroke-width="0.7"/><path d="M14 2l8 3v18l-8-3z" fill="#4a8ad0" stroke="#1f4f8a" stroke-width="0.7"/><path d="M12 1v22" stroke="#d01010" stroke-width="2" stroke-dasharray="2.5 2"/></svg>
<svg style="left:1039.75px;top:90.75px;" width="24" height="24" viewBox="0 0 24 24"><path d="M2 8c0-4 3-6 8-6l12 2-4 4H11c-3 0-4 2-4 4v10l-5-2z" fill="#4a8ad0" stroke="#1f4f8a" stroke-width="0.7"/><path d="M3 17l4 2v3l-5-2z" fill="#2f6fb8"/></svg>
<svg style="left:1072.0px;top:90.75px;" width="24" height="24" viewBox="0 0 24 24"><path d="M2 16l8-14 12 3-8 13z" fill="#4a8ad0" stroke="#1f4f8a" stroke-width="0.7"/><path d="M2 16l12 2v4l-12-2z" fill="#2f6fb8" stroke="#1f4f8a" stroke-width="0.7"/></svg>
<svg style="left:1106.0px;top:90.75px;" width="24" height="24" viewBox="0 0 24 24"><path d="M3 5l18-3v16L3 21z" fill="#4a8ad0" stroke="#1f4f8a" stroke-width="0.7"/><path d="M3 5v17M21 1v17" stroke="#e01010" stroke-width="2.2"/></svg>
<svg style="left:1138.5px;top:90.75px;" width="24" height="24" viewBox="0 0 24 24"><path d="M3 10l9-6 9 2v16l-9-3-9 0z" fill="#3a78c0" stroke="#1f4f8a" stroke-width="0.7"/><path d="M12 4l9 2v16l-9-3z" fill="#2a5a9c"/><path d="M3 10h8v9H3z" fill="none" stroke="#e01010" stroke-width="2"/><path d="M12 4l9 2v16l-9-3z" fill="none" stroke="#e01010" stroke-width="1.6"/></svg>
<svg style="left:1171.75px;top:90.75px;" width="24" height="24" viewBox="0 0 24 24"><path d="M2 14c2-8 6-12 12-12l4 8c-4 0-7 3-8 8z" fill="#4a8ad0" stroke="#1f4f8a" stroke-width="0.7"/><path d="M2 14l8 4 1 4-8-2z" fill="#2a5a9c" stroke="#e01010" stroke-width="1.5"/><path d="M14 2l4 8" stroke="#e01010" stroke-width="1.8"/><circle cx="21" cy="2.5" r="1.5" fill="#e01010"/></svg>
<svg style="left:1204.0px;top:90.75px;" width="24" height="24" viewBox="0 0 24 24"><path d="M12 1l6 6h-3v5h-6V7H6z" fill="#9c9c9c"/><path d="M3 14l9 2 9-2-3 4H6z" fill="#c0c0c0" stroke="#888" stroke-width="0.6"/><path d="M3 20h18l-3 3H6z" fill="#c8c8c8" stroke="#888" stroke-width="0.6"/></svg>
<svg style="left:1233.75px;top:99.75px;" width="10" height="6" viewBox="0 0 10 6"><path d="M0.5 0.5h8L4.5 5z" fill="#cfcfcf"/></svg>
<svg style="left:1250.0px;top:90.75px;" width="24" height="24" viewBox="0 0 24 24"><path d="M2 9l10-3 10 3v8l-10 3-10-3z" fill="#b4b4b4" stroke="#888" stroke-width="0.7"/><path d="M2 9l10 3 10-3" stroke="#888" fill="none" stroke-width="0.7"/><path d="M12 12l10-3v8l-10 3z" fill="#9a9a9a"/></svg>
<svg style="left:1298.5px;top:90.75px;" width="24" height="24" viewBox="0 0 24 24"><path d="M4 2H1v20h3M20 2h3v20h-3" stroke="#333" stroke-width="1.3" fill="none"/><path d="M4 6l8-2 8 2v12l-8 3-8-3z" fill="#3f7fc8" stroke="#1f4f8a" stroke-width="0.7"/><path d="M12 8l8-2v12l-8 3z" fill="#2a64b0"/></svg>
<svg style="left:1327.5px;top:99.75px;" width="10" height="6" viewBox="0 0 10 6"><path d="M0.5 0.5h8L4.5 5z" fill="#444"/></svg>
<svg style="left:1343.5px;top:90.75px;" width="24" height="24" viewBox="0 0 24 24"><circle cx="15" cy="9" r="7.5" fill="#3f7fc8" stroke="#1f4f8a" stroke-width="0.8"/><circle cx="9" cy="15" r="7.5" fill="#2f6ab8" stroke="#1f4f8a" stroke-width="0.8"/></svg>
<svg style="left:1376.75px;top:90.75px;" width="24" height="24" viewBox="0 0 24 24"><circle cx="9" cy="15" r="7.5" fill="#a8a8a8" stroke="#999" stroke-width="0.8"/><circle cx="15" cy="9" r="7.5" fill="#fafafa" stroke="#aaa" stroke-width="0.8"/></svg>
<svg style="left:1409.75px;top:90.75px;" width="24" height="24" viewBox="0 0 24 24"><circle cx="15" cy="9" r="7.5" fill="#a8a8a8" stroke="#999" stroke-width="0.8"/><circle cx="9" cy="15" r="7.5" fill="#a8a8a8" stroke="#999" stroke-width="0.8"/></svg>
<svg style="left:1442.5px;top:90.75px;" width="24" height="24" viewBox="0 0 24 24"><circle cx="15" cy="9" r="7.5" fill="none" stroke="#999" stroke-width="1"/><circle cx="9" cy="15" r="7.5" fill="none" stroke="#999" stroke-width="1"/><path d="M10 8a7.5 7.5 0 0 1 6 8 7.5 7.5 0 0 1-6-8z" fill="#b0b0b0"/></svg>
<svg style="left:1475.5px;top:90.75px;" width="24" height="24" viewBox="0 0 24 24"><path d="M1.5 0.8h9.2v7.5h12.5v8.7H10.7v6.2H1.5z" fill="#4a86c8" stroke="#1f4f8a" stroke-width="0.6"/><path d="M2.5 0.8V23.2M10.7 8.3H23.2M10.7 17H23.2" fill="none" stroke="#e01010" stroke-width="2"/></svg>
<svg style="left:1505px;top:99.75px;" width="10" height="6" viewBox="0 0 10 6"><path d="M0.5 0.5h8L4.5 5z" fill="#444"/></svg>
<svg style="left:1521.0px;top:90.75px;" width="24" height="24" viewBox="0 0 24 24"><circle cx="16" cy="8" r="6.5" fill="#3f7fc8" stroke="#1f4f8a" stroke-width="0.8"/><circle cx="8" cy="16" r="6.5" fill="#3f7fc8" stroke="#1f4f8a" stroke-width="0.8"/><path d="M9 12a6 6 0 0 1 6 6" fill="none" stroke="#fff" stroke-width="1.6"/></svg>
<svg style="left:1550px;top:99.75px;" width="10" height="6" viewBox="0 0 10 6"><path d="M0.5 0.5h8L4.5 5z" fill="#444"/></svg>
<svg style="left:1566.0px;top:90.75px;" width="24" height="24" viewBox="0 0 24 24"><path d="M12 5l7 15a7 2.5 0 0 1-14 0z" fill="#a0a0a0" stroke="#888" stroke-width="0.6"/><circle cx="12" cy="5" r="3.5" fill="#e8e8e8" stroke="#999"/></svg>
<svg style="left:1599.0px;top:90.75px;" width="24" height="24" viewBox="0 0 24 24"><path d="M2 6l10-3 10 3v12l-10 3-10-3z" fill="#b8b8b8" stroke="#909090" stroke-width="0.7"/><path d="M7 12c2-4 8-4 9 0l2-1-1 5-4-2 2-1c-1-2-5-2-6 1z" fill="#888"/></svg>
<svg style="left:1631.75px;top:90.75px;" width="24" height="24" viewBox="0 0 24 24"><path d="M3 3l16 2v16L3 19z" fill="#b4b4b4" stroke="#888" stroke-width="0.7"/><path d="M8 7l7 1v9l-7-1z" fill="#8a8a8a"/><path d="M19 5l3 2v14l-3 0z" fill="#999"/></svg>
<svg style="left:1665.0px;top:90.75px;" width="24" height="24" viewBox="0 0 24 24"><path d="M7 4l2-2h7l1 1v19l-2 1H7z" fill="#a8a8a8" stroke="#7a7a7a" stroke-width="0.7"/><path d="M9 2v21" stroke="#8a8a8a" stroke-width="0.6"/><path d="M1 10l4-3h17l-4 3z" fill="#b0b0b0" stroke="#7a7a7a" stroke-width="0.6"/><path d="M1 17l4-3h17l-4 3z" fill="#b0b0b0" stroke="#7a7a7a" stroke-width="0.6"/><path d="M7 10h10v4H7z" fill="#a0a0a0"/></svg>
<svg style="left:83.75px;top:129.5px;" width="24" height="24" viewBox="0 0 24 24"><path d="M4 1h16v22H6l-2-2z" fill="#f2f2f2" stroke="#666" stroke-width="0.8"/><circle cx="11" cy="10" r="5" fill="#33c6d0" stroke="#0f6b72" stroke-width="1"/><path d="M14.5 13.5l5 5" stroke="#0f6b72" stroke-width="2.5"/></svg>
<svg style="left:116.0px;top:129.5px;" width="24" height="24" viewBox="0 0 24 24"><circle cx="10" cy="10" r="7.5" fill="#33c6d0" stroke="#0f6b72" stroke-width="1.2"/><path d="M15.5 15.5l6 6" stroke="#0f6b72" stroke-width="3"/><path d="M6 14l6-6M8 8h4v4" stroke="#eee" stroke-width="1.6" fill="none"/></svg>
<svg style="left:150.0px;top:129.5px;" width="24" height="24" viewBox="0 0 24 24"><path d="M12 1l10 5.5v11L12 23 2 17.5v-11z" fill="#33c6d0" stroke="#0f6b72" stroke-width="1"/><circle cx="12" cy="12" r="6" fill="none" stroke="#d01010" stroke-width="2.2"/><path d="M8 8l8 8" stroke="#d01010" stroke-width="2.2"/></svg>
<svg style="left:179px;top:138.5px;" width="10" height="6" viewBox="0 0 10 6"><path d="M0.5 0.5h8L4.5 5z" fill="#444"/></svg>
<svg style="left:202.0px;top:129.5px;" width="24" height="24" viewBox="0 0 24 24"><path d="M12 1l10 5v12l-10 5-10-5V6z" fill="none" stroke="#0f6b72" stroke-width="1.5"/><path d="M2 6l10 5 10-5M12 11v12" stroke="#0f6b72" stroke-width="1.2" fill="none"/><path d="M5 17l2 1M17 17l2-1M12 4v3" stroke="#0f6b72" stroke-width="1.5"/></svg>
<svg style="left:242.0px;top:129.5px;" width="24" height="24" viewBox="0 0 24 24"><path d="M3 7l6-5h12v15l-6 5H3z" fill="#33d0da" stroke="#0f6b72" stroke-width="1.3"/><path d="M3 7h12l6-5M15 7v15" stroke="#0f6b72" stroke-width="1.1" fill="none"/><path d="M3 7h12v15H3z" fill="#2ed3dd"/><path d="M3 7h12v15H3z" fill="none" stroke="#0f6b72" stroke-width="1.3"/></svg>
<svg style="left:275.0px;top:129.5px;" width="24" height="24" viewBox="0 0 24 24"><path d="M3 7l6-5h12v15l-6 5H3z" fill="#33d0da" stroke="#0f6b72" stroke-width="1.3"/><path d="M3 7h12l6-5M15 7v15" stroke="#0f6b72" stroke-width="1.1" fill="none"/><path d="M3 7l6-5h12l-6 5z" fill="#6de2ea" stroke="#0f6b72" stroke-width="1"/><circle cx="9" cy="13" r="1" fill="#0f6b72"/><path d="M6 17l2-2M11 17l1 2" stroke="#0f6b72"/></svg>
<svg style="left:308.0px;top:129.5px;" width="24" height="24" viewBox="0 0 24 24"><path d="M3 7l6-5h12v15l-6 5H3z" fill="#33d0da" stroke="#0f6b72" stroke-width="1.3"/><path d="M3 7h12l6-5M15 7v15" stroke="#0f6b72" stroke-width="1.1" fill="none"/><path d="M15 7l6-5v15l-6 5z" fill="#20b8c2"/><circle cx="9" cy="13" r="1" fill="#0f6b72"/><path d="M6 17l2-2M11 17l1 2" stroke="#0f6b72"/></svg>
<svg style="left:347.5px;top:129.5px;" width="24" height="24" viewBox="0 0 24 24"><path d="M3 7l6-5h12v15l-6 5H3z" fill="none" stroke="#0f6b72" stroke-width="1.4"/><path d="M3 7h12l6-5M15 7v15" stroke="#0f6b72" stroke-width="1.4" fill="none"/><path d="M9 2v13H3M9 15l6 7" stroke="#0f6b72" stroke-width="1" fill="none"/><path d="M4 8h10v13H4z" fill="#33d0da" opacity="0.35"/></svg>
<svg style="left:380.5px;top:129.5px;" width="24" height="24" viewBox="0 0 24 24"><path d="M3 7l6-5h12v15l-6 5H3z" fill="none" stroke="#0f6b72" stroke-width="1.4"/><path d="M3 7h12l6-5M15 7v15" stroke="#0f6b72" stroke-width="1.4" fill="none"/><path d="M9 2v13H3M9 15h12" stroke="#0f6b72" stroke-width="1" fill="none"/><path d="M3 22l6-7h12l-6 7z" fill="#33d0da" opacity="0.5"/></svg>
<svg style="left:413.75px;top:129.5px;" width="24" height="24" viewBox="0 0 24 24"><path d="M3 7l6-5h12v15l-6 5H3z" fill="none" stroke="#0f6b72" stroke-width="1.4"/><path d="M3 7h12l6-5M15 7v15" stroke="#0f6b72" stroke-width="1.4" fill="none"/><path d="M9 2v13H3M9 15h12" stroke="#0f6b72" stroke-width="1" fill="none"/><path d="M3 7l6-5v13l-6 7z" fill="#33d0da" opacity="0.7"/></svg>
<svg style="left:452.5px;top:129.5px;" width="24" height="24" viewBox="0 0 24 24"><path d="M2 6l4-4 16 16-4 4z" fill="#33c6d0" stroke="#0f6b72" stroke-width="1"/><path d="M6 6l2-2M9 9l2-2M12 12l2-2M15 15l2-2" stroke="#0f6b72" stroke-width="1"/></svg>
<svg style="left:502.5px;top:129.5px;" width="24" height="24" viewBox="0 0 24 24"><g transform="translate(1.5 1) scale(1.45)"><path d="M1 5.5L6 3 11 5.5V8.5L14 10V14L8 17 1 13.5z" fill="#ecd620" stroke="#5a4a04" stroke-width="0.6" stroke-linejoin="round"/><path d="M1 5.5L6 3 11 5.5 6 8z" fill="#f8ec70"/><path d="M6 11L11 8.5 14 10 9 12.5z" fill="#f8ec70"/><path d="M6 8V11L9 12.5V17L8 17 1 13.5V5.5z" fill="#a89208" opacity="0.45"/><path d="M1 5.5L6 8V11L9 12.5V17M6 8L11 5.5M9 12.5L14 10" fill="none" stroke="#5a4a04" stroke-width="0.6"/></g></svg>
<svg style="left:535.5px;top:129.5px;" width="24" height="24" viewBox="0 0 24 24"><path d="M1 3h8l2 2.5h10V21H1z" fill="#8a8a8a"/><path d="M1.5 8h20V21h-20z" fill="#6a9ee0" stroke="#4a78b8" stroke-width="0.6"/></svg>
<svg style="left:585.0px;top:129.5px;" width="24" height="24" viewBox="0 0 24 24"><circle cx="12" cy="12" r="11" fill="#d91414" stroke="#8a0a0a" stroke-width="0.8"/><circle cx="9" cy="8" r="4" fill="#f04a4a" opacity="0.5"/></svg>
<svg style="left:618.0px;top:129.5px;" width="24" height="24" viewBox="0 0 24 24"><rect x="6" y="6" width="12" height="12" fill="#f8f8f8" stroke="#bdbdbd"/></svg>
<svg style="left:651.0px;top:129.5px;" width="24" height="24" viewBox="0 0 24 24"><rect x="2" y="3" width="18" height="19" fill="#f3f0e0" stroke="#a09a80" stroke-width="0.8"/><path d="M3 3h16" stroke="#c0a040" stroke-width="2" stroke-dasharray="1 1"/><path d="M5 8h12M5 11h12M5 14h10M5 17h8" stroke="#999" stroke-width="0.8"/><path d="M8 19l12-10 2 2-12 10-3 1z" fill="#e0a030" stroke="#805010" stroke-width="0.6"/></svg>
<svg style="left:683.5px;top:129.5px;" width="24" height="24" viewBox="0 0 24 24"><path d="M6 4l14 8-14 8z" fill="#fafafa" stroke="#c8c8c8" stroke-width="1"/></svg>
<svg style="left:731.75px;top:129.5px;" width="24" height="24" viewBox="0 0 24 24"><path d="M2 4.5Q2 2 4.5 2H14l4.5 3V18.5L15.5 20.5H4.5Q2 20.5 2 18z" fill="#d4d4d4" stroke="#4a4a4a" stroke-width="0.9"/><path d="M14 2l4.5 3V18.5L15.5 20.5V4z" fill="#b8b8b8" stroke="#4a4a4a" stroke-width="0.7"/><path d="M3.5 11.5a6 6 0 0 1 12 0z" fill="#f0d020"/><path d="M3.5 11.5a6 6 0 0 0 12 0z" fill="#5a5a5a"/><circle cx="9.5" cy="11.5" r="6" fill="none" stroke="#3a3a3a" stroke-width="0.8"/><rect x="16" y="8" width="1.6" height="6" fill="#e8c818"/><path d="M13 18.5l7 3 2.5 1" stroke="#5a4a10" stroke-width="2.6" fill="none"/><path d="M13 18.5l7 3 2.5 1" stroke="#e8c818" stroke-width="1.5" fill="none"/></svg>
<svg style="left:765.5px;top:129.5px;" width="24" height="24" viewBox="0 0 24 24"><path d="M2 4.5Q2 2 4.5 2H14l4.5 3V18.5L15.5 20.5H4.5Q2 20.5 2 18z" fill="#d4d4d4" stroke="#4a4a4a" stroke-width="0.9"/><path d="M14 2l4.5 3V18.5L15.5 20.5V4z" fill="#b8b8b8" stroke="#4a4a4a" stroke-width="0.7"/><path d="M3.5 11.5a6 6 0 0 1 12 0z" fill="#f0d020"/><path d="M3.5 11.5a6 6 0 0 0 12 0z" fill="#5a5a5a"/><circle cx="9.5" cy="11.5" r="6" fill="none" stroke="#3a3a3a" stroke-width="0.8"/><rect x="16" y="8" width="1.6" height="6" fill="#e8c818"/><path d="M13 18.5l7 3 2.5 1" stroke="#5a4a10" stroke-width="2.6" fill="none"/><path d="M13 18.5l7 3 2.5 1" stroke="#e8c818" stroke-width="1.5" fill="none"/><path d="M6 3a9 9 0 0 1 13 5" fill="none" stroke="#2a5aa8" stroke-width="2.4"/><path d="M18 7l2 2.5-3 0.5z" fill="#2a5aa8"/><path d="M1.5 3.5L5 21.5 22 12" fill="none" stroke="#d81818" stroke-width="2"/></svg>
<svg style="left:804.25px;top:129.5px;" width="24" height="24" viewBox="0 0 24 24"><path d="M2 4.5Q2 2 4.5 2H14l4.5 3V18.5L15.5 20.5H4.5Q2 20.5 2 18z" fill="#d4d4d4" stroke="#4a4a4a" stroke-width="0.9"/><path d="M14 2l4.5 3V18.5L15.5 20.5V4z" fill="#b8b8b8" stroke="#4a4a4a" stroke-width="0.7"/><path d="M3.5 11.5a6 6 0 0 1 12 0z" fill="#f0d020"/><path d="M3.5 11.5a6 6 0 0 0 12 0z" fill="#5a5a5a"/><circle cx="9.5" cy="11.5" r="6" fill="none" stroke="#3a3a3a" stroke-width="0.8"/><rect x="16" y="8" width="1.6" height="6" fill="#e8c818"/><path d="M13 18.5l7 3 2.5 1" stroke="#5a4a10" stroke-width="2.6" fill="none"/><path d="M13 18.5l7 3 2.5 1" stroke="#e8c818" stroke-width="1.5" fill="none"/><path d="M2 13l9 9M11 13l-9 9" stroke="#d81818" stroke-width="2.2"/></svg>
<svg style="left:838.0px;top:129.5px;" width="24" height="24" viewBox="0 0 24 24"><path d="M2 4.5Q2 2 4.5 2H14l4.5 3V18.5L15.5 20.5H4.5Q2 20.5 2 18z" fill="#d4d4d4" stroke="#4a4a4a" stroke-width="0.9"/><path d="M14 2l4.5 3V18.5L15.5 20.5V4z" fill="#b8b8b8" stroke="#4a4a4a" stroke-width="0.7"/><path d="M3.5 11.5a6 6 0 0 1 12 0z" fill="#f0d020"/><path d="M3.5 11.5a6 6 0 0 0 12 0z" fill="#5a5a5a"/><circle cx="9.5" cy="11.5" r="6" fill="none" stroke="#3a3a3a" stroke-width="0.8"/><rect x="16" y="8" width="1.6" height="6" fill="#e8c818"/><path d="M13 18.5l7 3 2.5 1" stroke="#5a4a10" stroke-width="2.6" fill="none"/><path d="M13 18.5l7 3 2.5 1" stroke="#e8c818" stroke-width="1.5" fill="none"/><path d="M1.5 22V2.5h21V22" fill="none" stroke="#5ac830" stroke-width="2.2"/><path d="M1.5 12l10-9.5 10 10-10 9.5" fill="none" stroke="#d81818" stroke-width="2.2"/></svg>
<svg style="left:871.75px;top:129.5px;" width="24" height="24" viewBox="0 0 24 24"><path d="M2 4.5Q2 2 4.5 2H14l4.5 3V18.5L15.5 20.5H4.5Q2 20.5 2 18z" fill="#d4d4d4" stroke="#4a4a4a" stroke-width="0.9"/><path d="M14 2l4.5 3V18.5L15.5 20.5V4z" fill="#b8b8b8" stroke="#4a4a4a" stroke-width="0.7"/><path d="M3.5 11.5a6 6 0 0 1 12 0z" fill="#f0d020"/><path d="M3.5 11.5a6 6 0 0 0 12 0z" fill="#5a5a5a"/><circle cx="9.5" cy="11.5" r="6" fill="none" stroke="#3a3a3a" stroke-width="0.8"/><rect x="16" y="8" width="1.6" height="6" fill="#e8c818"/><path d="M13 18.5l7 3 2.5 1" stroke="#5a4a10" stroke-width="2.6" fill="none"/><path d="M13 18.5l7 3 2.5 1" stroke="#e8c818" stroke-width="1.5" fill="none"/><path d="M1.5 12l10-9.5 10 10-10 9.5" fill="none" stroke="#d81818" stroke-width="2.2"/></svg>
<svg style="left:904.25px;top:129.5px;" width="24" height="24" viewBox="0 0 24 24"><path d="M2 4.5Q2 2 4.5 2H14l4.5 3V18.5L15.5 20.5H4.5Q2 20.5 2 18z" fill="#d4d4d4" stroke="#4a4a4a" stroke-width="0.9"/><path d="M14 2l4.5 3V18.5L15.5 20.5V4z" fill="#b8b8b8" stroke="#4a4a4a" stroke-width="0.7"/><path d="M3.5 11.5a6 6 0 0 1 12 0z" fill="#f0d020"/><path d="M3.5 11.5a6 6 0 0 0 12 0z" fill="#5a5a5a"/><circle cx="9.5" cy="11.5" r="6" fill="none" stroke="#3a3a3a" stroke-width="0.8"/><rect x="16" y="8" width="1.6" height="6" fill="#e8c818"/><path d="M13 18.5l7 3 2.5 1" stroke="#5a4a10" stroke-width="2.6" fill="none"/><path d="M13 18.5l7 3 2.5 1" stroke="#e8c818" stroke-width="1.5" fill="none"/><path d="M1.5 22V2.5h21V22" fill="none" stroke="#5ac830" stroke-width="2.2"/></svg>
<div class="r" style="left:67px;top:162px;width:309px;height:790px;background:#efefef;"></div>
<div class="t" id="f16" style="left:71.30px;top:165.64px;font-size:12px;color:#111;transform:scaleX(1.0912);">Combo View</div>
<svg style="left:343px;top:166px;" width="11" height="11" viewBox="0 0 11 11"><rect x="0.6" y="0.6" width="9.8" height="9.8" rx="2" fill="none" stroke="#6a6a6a" stroke-width="1.1"/><rect x="4" y="2.3" width="4.6" height="4.6" rx="1" fill="none" stroke="#6a6a6a" stroke-width="1"/><rect x="2.3" y="4" width="4.6" height="4.6" rx="1" fill="#f6f6f6" stroke="#6a6a6a" stroke-width="1"/></svg>
<svg style="left:357px;top:166px;" width="11" height="11" viewBox="0 0 11 11"><rect x="0.6" y="0.6" width="9.8" height="9.8" rx="2" fill="none" stroke="#6a6a6a" stroke-width="1.1"/><path d="M2.8 2.8l5.4 5.4M8.2 2.8l-5.4 5.4" stroke="#555" stroke-width="1.6"/></svg>
<div class="r" style="left:68px;top:206px;width:301px;height:746px;border:1px solid #c0c0c0;background:#efefef;box-sizing:border-box"></div>
<div class="r" style="left:127px;top:183px;width:58px;height:23px;border:1px solid #bdbdbd;border-bottom:none;border-radius:3px 3px 0 0;background:linear-gradient(#ececec,#e0e0e0)"></div>
<div class="r" style="left:68px;top:181px;width:59px;height:26px;border:1px solid #bdbdbd;border-bottom:none;border-radius:3px 3px 0 0;background:#f4f4f4"></div>
<div class="t" id="f17" style="left:79.00px;top:189.22px;font-size:12.5px;color:#111;transform:scaleX(1.0280);">Model</div>
<div class="t" id="f18" style="left:139.00px;top:190.62px;font-size:12.5px;color:#111;transform:scaleX(1.0734);">Tasks</div>
<div class="r" style="left:69px;top:208px;width:300px;height:342px;border:1px solid #b5b5b5;background:#fff;box-sizing:border-box"></div>
<div class="r" style="left:70px;top:209px;width:283px;height:18px;background:linear-gradient(#fdfdfd,#efefef);border-bottom:1px solid #c8c8c8"></div>
<div class="t" id="f19" style="left:72.50px;top:213.42px;font-size:12.5px;color:#111;transform:scaleX(1.0908);">Labels &amp; Attributes</div>
<div class="r" style="left:353px;top:209px;width:15px;height:325px;background:#e8e8e8;"></div>
<div class="r" style="left:353px;top:209px;width:1px;height:325px;background:#d4d4d4;"></div>
<div class="r" style="left:355px;top:228px;width:12px;height:207px;background:#d2d2d2;"></div>
<svg style="left:355px;top:212px;" width="12" height="8" viewBox="0 0 12 8"><path d="M1.5 6.5L6 1.5l4.5 5z" fill="#444"/></svg>
<svg style="left:355px;top:523px;" width="12" height="8" viewBox="0 0 12 8"><path d="M1.5 1.5L6 6.5l4.5-5z" fill="#444"/></svg>
<div class="r" style="left:355px;top:220px;width:12px;height:1px;background:#cfcfcf;"></div>
<div class="r" style="left:355px;top:521px;width:12px;height:1px;background:#cfcfcf;"></div>
<div class="r" style="left:70px;top:535px;width:283px;height:14px;background:#e8e8e8;"></div>
<div class="r" style="left:70px;top:535px;width:283px;height:1px;background:#d4d4d4;"></div>
<div class="r" style="left:277px;top:537px;width:62px;height:12px;background:#d2d2d2;"></div>
<svg style="left:72px;top:537px;" width="8" height="12" viewBox="0 0 8 12"><path d="M6.5 1.5L1.5 6l5 4.5z" fill="#444"/></svg>
<svg style="left:342px;top:537px;" width="8" height="12" viewBox="0 0 8 12"><path d="M1.5 1.5L6.5 6l-5 4.5z" fill="#444"/></svg>
<div class="r" style="left:82px;top:536px;width:1px;height:13px;background:#cfcfcf;"></div>
<div class="r" style="left:339px;top:536px;width:1px;height:13px;background:#cfcfcf;"></div>
<div class="r" style="left:353px;top:535px;width:15px;height:14px;background:#efefef;"></div>
<div class="r" style="left:70px;top:228px;width:283px;height:306px;overflow:hidden">
<svg style="left:64px;top:1px;" width="14" height="16" viewBox="0 0 14 16"><ellipse cx="4" cy="8" rx="2.6" ry="6.5" fill="none" stroke="#4f6e96" stroke-width="1.8"/><ellipse cx="10" cy="8" rx="2.6" ry="6.5" fill="none" stroke="#a82a2a" stroke-width="1.8"/></svg>
<div class="t" style="left:85.30px;top:4.42px;font-size:12.5px;color:#111;transform:scaleX(1.05);">circularEdge_011__2-Bucket Lever_001</div>
<svg style="left:64px;top:19px;" width="14" height="16" viewBox="0 0 14 16"><ellipse cx="4" cy="8" rx="2.6" ry="6.5" fill="none" stroke="#4f6e96" stroke-width="1.8"/><ellipse cx="10" cy="8" rx="2.6" ry="6.5" fill="none" stroke="#a82a2a" stroke-width="1.8"/></svg>
<div class="t" style="left:85.30px;top:22.42px;font-size:12.5px;color:#111;transform:scaleX(1.05);">circularEdge_012__2-Bucket Mount_001</div>
<svg style="left:25px;top:42px;" width="10" height="6" viewBox="0 0 10 6"><path d="M0.5 0.5h8.5L4.75 5z" fill="#444"/></svg>
<svg style="left:43.3px;top:36px;" width="15" height="18" viewBox="0 0 15 18"><path d="M1 5.5L6 3 11 5.5V8.5L14 10V14L8 17 1 13.5z" fill="#8e6c9e" stroke="#5d4070" stroke-width="0.7" stroke-linejoin="round"/><path d="M1 5.5L6 3 11 5.5 6 8z" fill="#b59ac2"/><path d="M6 11L11 8.5 14 10 9 12.5z" fill="#b59ac2"/><path d="M6 8V11L9 12.5V17L8 17 1 13.5V5.5z" fill="#5d4070" opacity="0.45"/><path d="M1 5.5L6 8V11L9 12.5V17M6 8L11 5.5M9 12.5L14 10" fill="none" stroke="#5d4070" stroke-width="0.7"/></svg>
<div class="t" style="left:65.30px;top:40.42px;font-size:12.5px;color:#111;transform:scaleX(1.055);">Bucket Cylinder Body_001</div>
<svg style="left:63px;top:55px;" width="16" height="16" viewBox="0 0 16 16"><ellipse cx="8.5" cy="10" rx="7" ry="3" fill="#7aaae0" stroke="#44668a" stroke-width="0.5"/><ellipse cx="7.5" cy="6" rx="7" ry="3" fill="#e01818" stroke="#801010" stroke-width="0.5"/><path d="M2 1l11 14" stroke="#555" stroke-width="0.8"/></svg>
<div class="t" style="left:85.30px;top:58.42px;font-size:12.5px;color:#111;transform:scaleX(1.05);">axisCoincident_005__1-Arm-Assembly_001</div>
<svg style="left:64px;top:73px;" width="14" height="16" viewBox="0 0 14 16"><ellipse cx="4" cy="8" rx="2.6" ry="6.5" fill="none" stroke="#4f6e96" stroke-width="1.8"/><ellipse cx="10" cy="8" rx="2.6" ry="6.5" fill="none" stroke="#a82a2a" stroke-width="1.8"/></svg>
<div class="t" style="left:85.30px;top:76.42px;font-size:12.5px;color:#111;transform:scaleX(1.05);">circularEdge_010__Bucket Cylinder Rod_001</div>
<svg style="left:25px;top:96px;" width="10" height="6" viewBox="0 0 10 6"><path d="M0.5 0.5h8.5L4.75 5z" fill="#444"/></svg>
<svg style="left:43.3px;top:90px;" width="15" height="18" viewBox="0 0 15 18"><path d="M1 5.5L6 3 11 5.5V8.5L14 10V14L8 17 1 13.5z" fill="#8e6c9e" stroke="#5d4070" stroke-width="0.7" stroke-linejoin="round"/><path d="M1 5.5L6 3 11 5.5 6 8z" fill="#b59ac2"/><path d="M6 11L11 8.5 14 10 9 12.5z" fill="#b59ac2"/><path d="M6 8V11L9 12.5V17L8 17 1 13.5V5.5z" fill="#5d4070" opacity="0.45"/><path d="M1 5.5L6 8V11L9 12.5V17M6 8L11 5.5M9 12.5L14 10" fill="none" stroke="#5d4070" stroke-width="0.7"/></svg>
<div class="t" style="left:65.30px;top:94.42px;font-size:12.5px;color:#111;transform:scaleX(1.055);">Bucket Cylinder Rod_001</div>
<svg style="left:64px;top:109px;" width="14" height="16" viewBox="0 0 14 16"><ellipse cx="4" cy="8" rx="2.6" ry="6.5" fill="none" stroke="#4f6e96" stroke-width="1.8"/><ellipse cx="10" cy="8" rx="2.6" ry="6.5" fill="none" stroke="#a82a2a" stroke-width="1.8"/></svg>
<div class="t" style="left:85.30px;top:112.42px;font-size:12.5px;color:#111;transform:scaleX(1.05);">circularEdge_010__Bucket Cylinder Body_001</div>
<svg style="left:63px;top:127px;" width="16" height="16" viewBox="0 0 16 16"><ellipse cx="8.5" cy="10" rx="7" ry="3" fill="#7aaae0" stroke="#44668a" stroke-width="0.5"/><ellipse cx="7.5" cy="6" rx="7" ry="3" fill="#e01818" stroke="#801010" stroke-width="0.5"/><path d="M2 1l11 14" stroke="#555" stroke-width="0.8"/></svg>
<div class="t" style="left:85.30px;top:130.42px;font-size:12.5px;color:#111;transform:scaleX(1.05);">axisCoincident_006__2-Bucket Lever_001</div>
<svg style="left:25px;top:150px;" width="10" height="6" viewBox="0 0 10 6"><path d="M0.5 0.5h8.5L4.75 5z" fill="#444"/></svg>
<svg style="left:43.3px;top:144px;" width="15" height="18" viewBox="0 0 15 18"><path d="M1 5.5L6 3 11 5.5V8.5L14 10V14L8 17 1 13.5z" fill="#8e6c9e" stroke="#5d4070" stroke-width="0.7" stroke-linejoin="round"/><path d="M1 5.5L6 3 11 5.5 6 8z" fill="#b59ac2"/><path d="M6 11L11 8.5 14 10 9 12.5z" fill="#b59ac2"/><path d="M6 8V11L9 12.5V17L8 17 1 13.5V5.5z" fill="#5d4070" opacity="0.45"/><path d="M1 5.5L6 8V11L9 12.5V17M6 8L11 5.5M9 12.5L14 10" fill="none" stroke="#5d4070" stroke-width="0.7"/></svg>
<div class="t" style="left:65.30px;top:148.42px;font-size:12.5px;color:#111;transform:scaleX(1.055);">2-Bucket Mount_001</div>
<svg style="left:64px;top:163px;" width="14" height="16" viewBox="0 0 14 16"><ellipse cx="4" cy="8" rx="2.6" ry="6.5" fill="none" stroke="#4f6e96" stroke-width="1.8"/><ellipse cx="10" cy="8" rx="2.6" ry="6.5" fill="none" stroke="#a82a2a" stroke-width="1.8"/></svg>
<div class="t" style="left:85.30px;top:166.42px;font-size:12.5px;color:#111;transform:scaleX(1.05);">circularEdge_013__1-Arm-Assembly_001</div>
<svg style="left:64px;top:181px;" width="14" height="16" viewBox="0 0 14 16"><ellipse cx="4" cy="8" rx="2.6" ry="6.5" fill="none" stroke="#4f6e96" stroke-width="1.8"/><ellipse cx="10" cy="8" rx="2.6" ry="6.5" fill="none" stroke="#a82a2a" stroke-width="1.8"/></svg>
<div class="t" style="left:85.30px;top:184.42px;font-size:12.5px;color:#111;transform:scaleX(1.05);">circularEdge_012__2-Bucket Lever_001</div>
<svg style="left:64px;top:199px;" width="14" height="16" viewBox="0 0 14 16"><ellipse cx="4" cy="8" rx="2.6" ry="6.5" fill="none" stroke="#4f6e96" stroke-width="1.8"/><ellipse cx="10" cy="8" rx="2.6" ry="6.5" fill="none" stroke="#a82a2a" stroke-width="1.8"/></svg>
<div class="t" style="left:85.30px;top:202.42px;font-size:12.5px;color:#111;transform:scaleX(1.05);">circularEdge_014__Bucket_001</div>
<svg style="left:64px;top:217px;" width="14" height="16" viewBox="0 0 14 16"><ellipse cx="4" cy="8" rx="2.6" ry="6.5" fill="none" stroke="#4f6e96" stroke-width="1.8"/><ellipse cx="10" cy="8" rx="2.6" ry="6.5" fill="none" stroke="#a82a2a" stroke-width="1.8"/></svg>
<div class="t" style="left:85.30px;top:220.42px;font-size:12.5px;color:#111;transform:scaleX(1.05);">circularEdge_015__Bucket_001</div>
<svg style="left:25px;top:240px;" width="10" height="6" viewBox="0 0 10 6"><path d="M0.5 0.5h8.5L4.75 5z" fill="#444"/></svg>
<svg style="left:43.3px;top:234px;" width="15" height="18" viewBox="0 0 15 18"><path d="M1 5.5L6 3 11 5.5V8.5L14 10V14L8 17 1 13.5z" fill="#8e6c9e" stroke="#5d4070" stroke-width="0.7" stroke-linejoin="round"/><path d="M1 5.5L6 3 11 5.5 6 8z" fill="#b59ac2"/><path d="M6 11L11 8.5 14 10 9 12.5z" fill="#b59ac2"/><path d="M6 8V11L9 12.5V17L8 17 1 13.5V5.5z" fill="#5d4070" opacity="0.45"/><path d="M1 5.5L6 8V11L9 12.5V17M6 8L11 5.5M9 12.5L14 10" fill="none" stroke="#5d4070" stroke-width="0.7"/></svg>
<div class="t" style="left:65.30px;top:238.42px;font-size:12.5px;color:#111;transform:scaleX(1.055);">Bucket_001</div>
<svg style="left:64px;top:253px;" width="14" height="16" viewBox="0 0 14 16"><ellipse cx="4" cy="8" rx="2.6" ry="6.5" fill="none" stroke="#4f6e96" stroke-width="1.8"/><ellipse cx="10" cy="8" rx="2.6" ry="6.5" fill="none" stroke="#a82a2a" stroke-width="1.8"/></svg>
<div class="t" style="left:85.30px;top:256.42px;font-size:12.5px;color:#111;transform:scaleX(1.05);">circularEdge_014__2-Bucket Mount_001</div>
<svg style="left:64px;top:271px;" width="14" height="16" viewBox="0 0 14 16"><ellipse cx="4" cy="8" rx="2.6" ry="6.5" fill="none" stroke="#4f6e96" stroke-width="1.8"/><ellipse cx="10" cy="8" rx="2.6" ry="6.5" fill="none" stroke="#a82a2a" stroke-width="1.8"/></svg>
<div class="t" style="left:85.30px;top:274.42px;font-size:12.5px;color:#111;transform:scaleX(1.05);">circularEdge_015__2-Bucket Mount_001</div>
<svg style="left:27px;top:292px;" width="6" height="10" viewBox="0 0 6 10"><path d="M0.5 0.5L5 5 0.5 9.5z" fill="#444"/></svg>
<svg style="left:43.3px;top:288px;" width="15" height="18" viewBox="0 0 15 18"><path d="M1 5.5L6 3 11 5.5V8.5L14 10V14L8 17 1 13.5z" fill="#3f7fc8" stroke="#1f4f8a" stroke-width="0.7" stroke-linejoin="round"/><path d="M1 5.5L6 3 11 5.5 6 8z" fill="#7aaee8"/><path d="M6 11L11 8.5 14 10 9 12.5z" fill="#7aaee8"/><path d="M6 8V11L9 12.5V17L8 17 1 13.5V5.5z" fill="#1f4f8a" opacity="0.45"/><path d="M1 5.5L6 8V11L9 12.5V17M6 8L11 5.5M9 12.5L14 10" fill="none" stroke="#1f4f8a" stroke-width="0.7"/></svg>
<div class="t" style="left:65.30px;top:292.42px;font-size:12.5px;color:#111;transform:scaleX(1.055);">Body</div>
</div>
<svg style="left:208px;top:551px;" width="24" height="3" viewBox="0 0 24 3"><rect x="0" y="0" width="1.2" height="1.2" fill="#b0b0b0"/><rect x="3" y="0" width="1.2" height="1.2" fill="#b0b0b0"/><rect x="6" y="0" width="1.2" height="1.2" fill="#b0b0b0"/><rect x="9" y="0" width="1.2" height="1.2" fill="#b0b0b0"/><rect x="12" y="0" width="1.2" height="1.2" fill="#b0b0b0"/><rect x="15" y="0" width="1.2" height="1.2" fill="#b0b0b0"/><rect x="18" y="0" width="1.2" height="1.2" fill="#b0b0b0"/><rect x="21" y="0" width="1.2" height="1.2" fill="#b0b0b0"/></svg>
<div class="r" style="left:70px;top:556px;width:297px;height:370px;border:1px solid #b5b5b5;background:#fff;box-sizing:border-box;box-shadow:0 0 0 1px #dcdcdc"></div>
<div class="r" style="left:71px;top:557px;width:295px;height:18px;background:linear-gradient(#fdfdfd,#efefef);border-bottom:1px solid #c8c8c8"></div>
<div class="r" style="left:171px;top:558px;width:1px;height:17px;background:#c8c8c8;"></div>
<div class="t" id="f20" style="left:74.40px;top:560.42px;font-size:12.5px;color:#111;transform:scaleX(1.0582);">Property</div>
<div class="t" id="f21" style="left:174.40px;top:560.42px;font-size:12.5px;color:#111;transform:scaleX(1.0629);">Value</div>
<div class="r" style="left:69px;top:926px;width:53px;height:22px;border:1px solid #bdbdbd;border-top:none;border-radius:0 0 3px 3px;background:linear-gradient(#e0e0e0,#e8e8e8)"></div>
<div class="r" style="left:122px;top:925px;width:52px;height:25px;border:1px solid #bdbdbd;border-top:none;border-radius:0 0 3px 3px;background:#fbfbfb"></div>
<div class="t" id="f22" style="left:81.00px;top:931.92px;font-size:12.5px;color:#111;transform:scaleX(1.0791);">View</div>
<div class="t" id="f23" style="left:134.00px;top:932.92px;font-size:12.5px;color:#111;transform:scaleX(1.0604);">Data</div>
<div class="r" style="left:375px;top:161px;width:1545px;height:1px;background:#e6eaf4;"></div>
<div class="r" style="left:375px;top:161px;width:1px;height:761px;background:#e6eaf4;"></div>
<svg style="left:0px;top:0px;pointer-events:none" width="1920" height="1080" viewBox="0 0 1920 1080"><defs><linearGradient id="bg" gradientUnits="userSpaceOnUse" x1="0" y1="162" x2="0" y2="922"><stop offset="0" stop-color="#333366"/><stop offset="1" stop-color="#9494aa"/></linearGradient><linearGradient id="cyl" x1="0" y1="0" x2="0" y2="1"><stop offset="0" stop-color="#b5610c"/><stop offset="0.45" stop-color="#a85a0a"/><stop offset="0.7" stop-color="#b8640e"/><stop offset="1" stop-color="#9a5208"/></linearGradient><linearGradient id="rod" x1="0" y1="0" x2="0" y2="1"><stop offset="0" stop-color="#9a10e0"/><stop offset="0.35" stop-color="#b018ff"/><stop offset="1" stop-color="#8a08c8"/></linearGradient><clipPath id="vc"><rect x="376" y="162" width="1544" height="760"/></clipPath><clipPath id="gc"><path d="M1132 366C1132 352 1140 348 1152.7 347.9L1276.5 351L1280.00 350.00C1283.62 349.33 1293.70 346.25 1301.70 346.00C1309.70 345.75 1319.62 346.58 1328.00 348.50C1336.38 350.42 1345.00 354.25 1352.00 357.50C1359.00 360.75 1364.25 363.80 1370.00 368.00C1375.75 372.20 1381.50 377.87 1386.50 382.70C1391.50 387.53 1397.75 394.62 1400.00 397.00L1524 530.5L1150.4 515.6C1138 515 1132 508 1132 495z"/></clipPath><clipPath id="lc"><path d="M979.34 462.58L1162.72 388.37A30 30 0 0 1 1201 402L1219.5 468A31 31 0 0 1 1190 506C1168 506 1150 491 1120 486.5C1080 482 1030 505 1008.5 518.5A31.5 31.5 0 1 1 979.34 462.58z"/></clipPath></defs><rect x="376" y="162" width="1544" height="760" fill="url(#bg)"/><g clip-path="url(#vc)"><g transform="translate(504.2 178.3) rotate(17.641)" stroke="#1c1c1c" stroke-width="1.7"><path d="M-9 0H341V44H-30V27H-9z" fill="url(#cyl)"/><path d="M-9 9.5H341" stroke-width="0.9" fill="none"/><path d="M-30 33H341" fill="none"/><rect x="-9" y="-2" width="9" height="29" fill="#b5610c"/><rect x="-17" y="-1" width="8" height="12" fill="#b5610c"/><rect x="341" y="-1" width="9" height="47" fill="#b5610c"/><rect x="350" y="3" width="11" height="40" fill="#b5610c"/><path d="M350 10h6v-7M350 37h6v6" fill="none" stroke-width="1.1"/></g><g transform="translate(504.2 178.3) rotate(17.641)"><rect x="361" y="15.5" width="352" height="17" fill="url(#rod)" stroke="#1c1c1c" stroke-width="1"/></g><path d="M500 253.8L1125.7 500.6A37.5 37.5 0 0 1 1098.9 570.8L560 370.6z" fill="#ffb40f" stroke="#1c1c1c" stroke-width="1.7"/><path d="M370 158L471.07 158L602.46 402.32A33.2 33.2 0 1 1 542.85 431.44L507.81 351.60 370 299.5z" fill="#ffb40f" stroke="#1c1c1c" stroke-width="1.7"/><circle cx="573.25" cy="418.1" r="12.7" fill="url(#bg)" stroke="#1c1c1c" stroke-width="1.7"/><circle cx="450" cy="183.3" r="12" fill="#b5610c" stroke="#1c1c1c" stroke-width="1.5"/><circle cx="450" cy="183.3" r="9.2" fill="#ffff00" stroke="#1c1c1c" stroke-width="1.3"/><path d="M370 217L398.7 226.2A33.2 33.2 0 0 1 388.5 290.8L370 290.8z" fill="#0b670f" stroke="#1c1c1c" stroke-width="1.7"/><circle cx="388.5" cy="257.6" r="11.9" fill="url(#bg)" stroke="#1c1c1c" stroke-width="1.7"/><path d="M700.1 549.4L1050 562 1050 729 950.6 727.4 932.1 732.3 907.8 732.3 882.5 726.4 858.2 714.8 837.8 697.3z" fill="#ff0c0c" stroke="#1c1c1c" stroke-width="1.7"/><path d="M1163 495L1222.6 476 1222.5 518C1222 560 1210 610 1180 662L1150 590C1153 560 1157 530 1163 495z" fill="#0b670f" stroke="#1c1c1c" stroke-width="1.7"/><path d="M1100 510A31 31 0 0 1 1140 522.5L1181 650A31 31 0 0 1 1172.5 677.5L1085 732.5A31 31 0 0 1 1040 700L1040 580z" fill="#ff5cff" stroke="#1c1c1c" stroke-width="1.7"/><circle cx="1112" cy="538.75" r="12.5" fill="url(#bg)" stroke="#1c1c1c" stroke-width="1.7"/><circle cx="1152" cy="653.75" r="12.5" fill="url(#bg)" stroke="#1c1c1c" stroke-width="1.7"/><path d="M1027.5 561L1075 561A20 20 0 0 1 1095 581L1093 709A20 20 0 0 1 1073 729L950.6 727.4 1027.5 640z" fill="#ff0c0c" stroke="none"/><path d="M1020 561.3L1075 561A20 20 0 0 1 1095 581L1093 709A20 20 0 0 1 1073 729L950.6 727.4" fill="none" stroke="#1c1c1c" stroke-width="1.7"/><path d="M1027.4 562L1027.4 627.2C1027 650 1020 680 1000 700C985 714 968 722 950.6 727.4" fill="none" stroke="#1c1c1c" stroke-width="1.7"/><circle cx="1071.75" cy="585" r="12.5" fill="url(#bg)" stroke="#1c1c1c" stroke-width="1.7"/><circle cx="1070" cy="706.25" r="12.5" fill="url(#bg)" stroke="#1c1c1c" stroke-width="1.7"/><path d="M1132 366C1132 352 1140 348 1152.7 347.9L1276.5 351L1280.00 350.00C1283.62 349.33 1293.70 346.25 1301.70 346.00C1309.70 345.75 1319.62 346.58 1328.00 348.50C1336.38 350.42 1345.00 354.25 1352.00 357.50C1359.00 360.75 1364.25 363.80 1370.00 368.00C1375.75 372.20 1381.50 377.87 1386.50 382.70C1391.50 387.53 1397.75 394.62 1400.00 397.00L1524 530.5L1150.4 515.6C1138 515 1132 508 1132 495zM1167.6 371.25A12.6 12.6 0 1 0 1167.6 371.26z" fill="rgb(172,62,82)" fill-opacity="0.3" fill-rule="evenodd"/><path d="M1163 495L1222.6 476 1222.5 518C1222 560 1210 610 1180 662L1150 590C1153 560 1157 530 1163 495z" fill="#1f5812" clip-path="url(#gc)"/><path d="M979.34 462.58L1162.72 388.37A30 30 0 0 1 1201 402L1219.5 468A31 31 0 0 1 1190 506C1168 506 1150 491 1120 486.5C1080 482 1030 505 1008.5 518.5A31.5 31.5 0 1 1 979.34 462.58z" fill="#5fb3ff"/><path d="M979.34 462.58L1162.72 388.37A30 30 0 0 1 1201 402L1219.5 468A31 31 0 0 1 1190 506C1168 506 1150 491 1120 486.5C1080 482 1030 505 1008.5 518.5A31.5 31.5 0 1 1 979.34 462.58z" fill="#6ca8ea" clip-path="url(#gc)"/><circle cx="1190.5" cy="475.5" r="12" fill="url(#bg)"/><circle cx="1190.5" cy="475.5" r="12" fill="rgb(172,62,82)" fill-opacity="0.3" stroke="#3a1a30" stroke-width="1.7"/><path d="M979.34 462.58L1162.72 388.37A30 30 0 0 1 1201 402L1219.5 468A31 31 0 0 1 1190 506C1168 506 1150 491 1120 486.5C1080 482 1030 505 1008.5 518.5A31.5 31.5 0 1 1 979.34 462.58z" fill="none" stroke="#1c1c1c" stroke-width="1.7"/><circle cx="991.6" cy="491.6" r="12.4" fill="url(#bg)" stroke="#1c1c1c" stroke-width="1.7"/><circle cx="1152.7" cy="492.7" r="12" fill="#62628c" stroke="#1c1c1c" stroke-width="1.5"/><circle cx="1152.7" cy="492.7" r="12" fill="#5fb3ff" stroke="#1c1c1c" stroke-width="1.5" clip-path="url(#lc)"/><path d="M1133.5 386.5L1150 391.7 1133.5 402z" fill="#b018ff"/><path d="M1133.5 399L1133.5 386.5 1150 391.7" fill="none" stroke="#1c1c1c" stroke-width="1.1"/><circle cx="1174.4" cy="416" r="12" fill="#b010e0" stroke="#1c1c1c" stroke-width="1.3"/><circle cx="1174.4" cy="416" r="8.8" fill="#ffff00" stroke="#1c1c1c" stroke-width="1.2"/><path d="M1132 366C1132 352 1140 348 1152.7 347.9L1276.5 351L1280.00 350.00C1283.62 349.33 1293.70 346.25 1301.70 346.00C1309.70 345.75 1319.62 346.58 1328.00 348.50C1336.38 350.42 1345.00 354.25 1352.00 357.50C1359.00 360.75 1364.25 363.80 1370.00 368.00C1375.75 372.20 1381.50 377.87 1386.50 382.70C1391.50 387.53 1397.75 394.62 1400.00 397.00L1524 530.5L1150.4 515.6C1138 515 1132 508 1132 495z" fill="none" stroke="#1c1c1c" stroke-width="1.7"/><path d="M1200.80 433.00C1202.33 428.83 1206.17 414.85 1210.00 408.00C1213.83 401.15 1218.75 397.57 1223.75 391.90C1228.75 386.23 1233.89 379.35 1240.00 374.00C1246.11 368.65 1253.73 363.80 1260.40 359.80C1267.07 355.80 1273.12 352.30 1280.00 350.00C1286.88 347.70 1293.70 346.25 1301.70 346.00C1309.70 345.75 1323.62 348.08 1328.00 348.50" fill="none" stroke="#1c1c1c" stroke-width="1.7"/><path d="M1204.30 440.00C1205.75 435.67 1209.22 421.17 1213.00 414.00C1216.78 406.83 1222.00 402.67 1227.00 397.00C1232.00 391.33 1237.00 385.17 1243.00 380.00C1249.00 374.83 1256.50 369.92 1263.00 366.00C1269.50 362.08 1275.55 358.83 1282.00 356.50C1288.45 354.17 1294.37 352.42 1301.70 352.00C1309.03 351.58 1318.28 352.25 1326.00 354.00C1333.72 355.75 1341.33 359.33 1348.00 362.50C1354.67 365.67 1360.50 369.08 1366.00 373.00C1371.50 376.92 1376.33 381.50 1381.00 386.00C1385.67 390.50 1391.83 397.67 1394.00 400.00L1515 527" fill="none" stroke="#1c1c1c" stroke-width="1.4"/><path d="M1200.8 433C1198 450 1197.4 458 1197.4 516.8M1204.3 440C1204 460 1204.3 480 1204.3 516.8" fill="none" stroke="#1c1c1c" stroke-width="1.3"/><circle cx="1155" cy="371.25" r="12.6" fill="none" stroke="#1c1c1c" stroke-width="1.7"/></g></svg>
<svg style="left:0px;top:0px;pointer-events:none" width="1920" height="1080" viewBox="0 0 1920 1080"><path d="M1828.5 179.1L1837.5 169.8 1846.4 179.1z" fill="#dfe4ee"/>
<path d="M1828.5 310.5L1837.5 319.9 1846.4 310.5z" fill="#dfe4ee"/>
<path d="M1771 236.6L1762.4 244.8 1771 253z" fill="#dfe4ee"/>
<path d="M1903 236L1912.5 244.9 1903 253.8z" fill="#dfe4ee"/>
<path d="M1815 181C1804 184 1795 190 1788 197" fill="none" stroke="#dfe4ee" stroke-width="4.5"/>
<path d="M1783 202L1783.5 191 1793 198z" fill="#dfe4ee"/>
<path d="M1859 181C1870 184 1879 190 1886 197" fill="none" stroke="#dfe4ee" stroke-width="4.5"/>
<path d="M1891 202L1890.5 191 1881 198z" fill="#dfe4ee"/>
<rect x="1799.8" y="207.9" width="74.6" height="73.8" rx="13" fill="#e3e7ef"/>
<rect x="1808" y="215.7" width="58" height="58.3" rx="3" fill="#f7f8fb"/>
<path d="M1801 212l8 8M1873 212l-8 8M1801 277l8-8M1873 277l-8-8" stroke="#9aa0b8" stroke-width="1"/>
<path d="M1821 220.5h33M1821 268.5h33M1812.5 228v35M1861.5 228v35" stroke="#d4d6de" stroke-width="1.2"/>
<text x="1837.5" y="251.4" font-family="Liberation Sans" font-size="17.5" text-anchor="middle" fill="#000">Front</text>
<path d="M1799.5 207v75" stroke="#0000ff" stroke-width="1.2"/>
<path d="M1799.5 282h75" stroke="#e00000" stroke-width="1.2"/>
<path d="M1800 281l10-10" stroke="#20b020" stroke-width="1.2"/>
<path d="M1797 196.5h5l-5 6h5" fill="none" stroke="#0000ff" stroke-width="1"/>
<path d="M1881.5 281.5l5.5 6M1887 281.5l-5.5 6" stroke="#e00000" stroke-width="1"/>
<path d="M1863 296l11-4 11 4v14l-11 4-11-4z" fill="#e0e0e0" stroke="#bbb" stroke-width="0.6"/>
<path d="M1863 296l11 4 11-4M1874 300v14" stroke="#aaa" stroke-width="0.6" fill="none"/><path d="M1863 296l11 4v14l-11-4z" fill="#c4c4c4"/>
<path d="M1890 299h14l-7 7z" fill="#3a3a3a"/>
</svg>
<svg style="left:0px;top:0px;pointer-events:none" width="1920" height="1080" viewBox="0 0 1920 1080"><path d="M1882 884V862" stroke="#1a1a8a" stroke-width="1.6"/><path d="M1879 866.5L1882 857.5 1885 866.5z" fill="#1a1a8a"/>
<path d="M1882 884H1903" stroke="#8a1010" stroke-width="1.6"/><path d="M1899 881L1908 884 1899 887z" fill="#8a1010"/>
<path d="M1880.5 883a2 2 0 0 0 3 1.5" stroke="#20a020" stroke-width="1.2" fill="none"/>
<path d="M1885 851.5h5l-5 6.5h5" fill="none" stroke="#000" stroke-width="0.9"/>
<path d="M1885 877.5l2.5 3.3 2.5-3.3M1887.5 880.8v3.5" fill="none" stroke="#000" stroke-width="0.9"/>
<path d="M1911 877.5l5 6.5M1916 877.5l-5 6.5" fill="none" stroke="#000" stroke-width="0.9"/></svg>
<div class="t" style="left:392.00px;top:904.84px;font-size:12px;color:#ffff20;font-family:'Liberation Mono', monospace;letter-spacing:2.62px;">120.4 ms / 8.3 fps</div>
<div class="r" style="left:376px;top:922px;width:1544px;height:30px;background:#efefef;"></div>
<div class="r" style="left:660px;top:923px;width:1260px;height:1px;background:#c4c4c4;"></div>
<div class="r" style="left:376px;top:922px;width:284px;height:30px;border:1px solid #c0c0c0;border-top:none;border-radius:0 0 3px 3px;background:linear-gradient(#fafafa,#f2f2f2);box-sizing:border-box"></div>
<svg style="left:388px;top:929px;" width="16" height="16" viewBox="0 0 16 16"><path d="M1 1h7.5v2.8H4v3h3.8v2.8H4V15H1z" fill="#d7141a" stroke="#8a0a0a" stroke-width="0.5"/><polygon points="15.73,9.71 15.73,11.29 14.18,11.37 13.87,12.14 14.91,13.29 13.79,14.41 12.64,13.37 11.87,13.68 11.79,15.23 10.21,15.23 10.13,13.68 9.36,13.37 8.21,14.41 7.09,13.29 8.13,12.14 7.82,11.37 6.27,11.29 6.27,9.71 7.82,9.63 8.13,8.86 7.09,7.71 8.21,6.59 9.36,7.63 10.13,7.32 10.21,5.77 11.79,5.77 11.87,7.32 12.64,7.63 13.79,6.59 14.91,7.71 13.87,8.86 14.18,9.63" fill="#3f6fc8"/><circle cx="11" cy="10.5" r="1.40" fill="#f4f4f4"/></svg>
<div class="t" id="f24" style="left:408.00px;top:933.42px;font-size:12.5px;color:#111;transform:scaleX(1.0624);">0-Master-CAD-Back_Hoe testing : 1*</div>
<svg style="left:631px;top:931px;" width="14" height="13" viewBox="0 0 14 13"><path d="M2.5 1.5L12 11.5" stroke="#1a1a1a" stroke-width="2.8" stroke-linecap="round"/><path d="M11.5 1.5L2 12" stroke="#1a1a1a" stroke-width="1.6" stroke-linecap="round"/></svg>
<div class="r" style="left:67px;top:952px;width:1853px;height:128px;background:#efefef;"></div>
<div class="r" style="left:67px;top:979px;width:1853px;height:1px;background:#b8b8b8;"></div>
<div class="t" id="f25" style="left:71.00px;top:963.42px;font-size:12.5px;color:#111;transform:scaleX(1.0758);">Report view</div>
<svg style="left:963.5px;top:963.5px;" width="11" height="11" viewBox="0 0 11 11"><rect x="0.6" y="0.6" width="9.8" height="9.8" rx="2" fill="none" stroke="#6a6a6a" stroke-width="1.1"/><rect x="4" y="2.3" width="4.6" height="4.6" rx="1" fill="none" stroke="#6a6a6a" stroke-width="1"/><rect x="2.3" y="4" width="4.6" height="4.6" rx="1" fill="#f6f6f6" stroke="#6a6a6a" stroke-width="1"/></svg>
<svg style="left:977.5px;top:963.5px;" width="11" height="11" viewBox="0 0 11 11"><rect x="0.6" y="0.6" width="9.8" height="9.8" rx="2" fill="none" stroke="#6a6a6a" stroke-width="1.1"/><path d="M2.8 2.8l5.4 5.4M8.2 2.8l-5.4 5.4" stroke="#555" stroke-width="1.6"/></svg>
<div class="r" style="left:67px;top:980px;width:924px;height:100px;background:#fff"></div>
<div class="t" id="f26" style="left:72.20px;top:997.62px;font-size:12.5px;color:#111;transform:scaleX(1.1824);">angle in radians is: 3.1358247405883888</div>
<div class="t" id="f27" style="left:72.20px;top:1014.62px;font-size:12.5px;color:#111;transform:scaleX(1.1801);">angle in degrees is: 179.6695229284208892</div>
<div class="t" id="f28" style="left:72.20px;top:1031.62px;font-size:12.5px;color:#111;transform:scaleX(1.1871);">supplement in radians is: 0.0057679130014043</div>
<div class="t" id="f29" style="left:72.20px;top:1048.62px;font-size:12.5px;color:#111;transform:scaleX(1.1888);">supplement in degrees is: 0.3304770715791108</div>
<div class="r" style="left:976px;top:980px;width:15px;height:100px;background:#fdfdfd;border:1px solid #b8b8b8;box-sizing:border-box"></div>
<div class="r" style="left:977px;top:993px;width:13px;height:46px;background:#e2e2e2;border-top:1px solid #c8c8c8;border-bottom:1px solid #c8c8c8"></div>
<div class="r" style="left:977px;top:1065px;width:13px;height:1px;background:#c8c8c8;"></div>
<div class="r" style="left:991px;top:980px;width:6px;height:100px;background:#efefef;"></div>
<svg style="left:978px;top:983px;" width="12" height="8" viewBox="0 0 12 8"><path d="M1.5 6.5L6 1.5l4.5 5z" fill="#444"/></svg>
<svg style="left:978px;top:1068px;" width="12" height="8" viewBox="0 0 12 8"><path d="M1.5 1.5L6 6.5l4.5-5z" fill="#444"/></svg>
<svg style="left:993.8px;top:1013px;" width="3" height="18" viewBox="0 0 3 18"><rect x="0" y="0" width="1.2" height="1.2" fill="#a8a8a8"/><rect x="0" y="3" width="1.2" height="1.2" fill="#a8a8a8"/><rect x="0" y="6" width="1.2" height="1.2" fill="#a8a8a8"/><rect x="0" y="9" width="1.2" height="1.2" fill="#a8a8a8"/><rect x="0" y="12" width="1.2" height="1.2" fill="#a8a8a8"/><rect x="0" y="15" width="1.2" height="1.2" fill="#a8a8a8"/></svg>
<svg style="left:987px;top:955.5px;" width="18" height="3" viewBox="0 0 18 3"><rect x="0" y="0" width="1.2" height="1.2" fill="#a8a8a8"/><rect x="3" y="0" width="1.2" height="1.2" fill="#a8a8a8"/><rect x="6" y="0" width="1.2" height="1.2" fill="#a8a8a8"/><rect x="9" y="0" width="1.2" height="1.2" fill="#a8a8a8"/><rect x="12" y="0" width="1.2" height="1.2" fill="#a8a8a8"/><rect x="15" y="0" width="1.2" height="1.2" fill="#a8a8a8"/></svg>
<div class="t" id="f30" style="left:1001.00px;top:963.42px;font-size:12.5px;color:#111;transform:scaleX(1.0645);">Python console</div>
<svg style="left:1892px;top:963.5px;" width="11" height="11" viewBox="0 0 11 11"><rect x="0.6" y="0.6" width="9.8" height="9.8" rx="2" fill="none" stroke="#6a6a6a" stroke-width="1.1"/><rect x="4" y="2.3" width="4.6" height="4.6" rx="1" fill="none" stroke="#6a6a6a" stroke-width="1"/><rect x="2.3" y="4" width="4.6" height="4.6" rx="1" fill="#f6f6f6" stroke="#6a6a6a" stroke-width="1"/></svg>
<svg style="left:1906px;top:963.5px;" width="11" height="11" viewBox="0 0 11 11"><rect x="0.6" y="0.6" width="9.8" height="9.8" rx="2" fill="none" stroke="#6a6a6a" stroke-width="1.1"/><path d="M2.8 2.8l5.4 5.4M8.2 2.8l-5.4 5.4" stroke="#555" stroke-width="1.6"/></svg>
<div class="r" style="left:997px;top:980px;width:923px;height:100px;background:#fff;border-left:1px solid #c4c4c4;box-sizing:border-box"></div>
<div class="t" style="left:1002.50px;top:983.42px;font-size:12.5px;color:#9a9a9a;letter-spacing:3.6px;">&gt;&gt;&gt;</div>
<div class="t" id="f31" style="left:1038.50px;top:983.42px;font-size:12.5px;color:#111;transform:scaleX(1.1802);">Gui<span style="color:#9a9a9a">.</span>activateWorkbench<span style="color:#9a9a9a">(</span><span style="color:#e01010">"PartWorkbench"</span><span style="color:#9a9a9a">)</span></div>
<div class="t" style="left:1002.50px;top:1000.42px;font-size:12.5px;color:#9a9a9a;letter-spacing:3.6px;">&gt;&gt;&gt;</div>
<div class="t" id="f32" style="left:1038.50px;top:1000.42px;font-size:12.5px;color:#111;transform:scaleX(1.1830);">Gui<span style="color:#9a9a9a">.</span>activeDocument<span style="color:#9a9a9a">()</span><span style="color:#9a9a9a">.</span>activeView<span style="color:#9a9a9a">()</span><span style="color:#9a9a9a">.</span>viewFront<span style="color:#9a9a9a">()</span></div>
<div class="t" style="left:1002.50px;top:1017.42px;font-size:12.5px;color:#9a9a9a;letter-spacing:3.6px;">&gt;&gt;&gt;</div>
<div class="t" id="f33" style="left:1038.50px;top:1017.42px;font-size:12.5px;color:#111;transform:scaleX(1.1830);">Gui<span style="color:#9a9a9a">.</span>activeDocument<span style="color:#9a9a9a">()</span><span style="color:#9a9a9a">.</span>activeView<span style="color:#9a9a9a">()</span><span style="color:#9a9a9a">.</span>viewFront<span style="color:#9a9a9a">()</span></div>
<div class="t" style="left:1002.50px;top:1034.42px;font-size:12.5px;color:#9a9a9a;letter-spacing:3.6px;">&gt;&gt;&gt;</div>
<div class="t" id="f34" style="left:1038.50px;top:1034.42px;font-size:12.5px;color:#111;transform:scaleX(1.1830);">Gui<span style="color:#9a9a9a">.</span>activeDocument<span style="color:#9a9a9a">()</span><span style="color:#9a9a9a">.</span>activeView<span style="color:#9a9a9a">()</span><span style="color:#9a9a9a">.</span>viewFront<span style="color:#9a9a9a">()</span></div>
<div class="t" style="left:1002.50px;top:1051.42px;font-size:12.5px;color:#9a9a9a;letter-spacing:3.6px;">&gt;&gt;&gt;</div>
<div class="r" style="left:1905px;top:980px;width:15px;height:100px;background:#fdfdfd;border:1px solid #b8b8b8;box-sizing:border-box"></div>
<div class="r" style="left:1906px;top:993px;width:13px;height:46px;background:#e2e2e2;border-top:1px solid #c8c8c8;border-bottom:1px solid #c8c8c8"></div>
<div class="r" style="left:1906px;top:1065px;width:13px;height:1px;background:#c8c8c8;"></div>
<svg style="left:1907px;top:983px;" width="12" height="8" viewBox="0 0 12 8"><path d="M1.5 6.5L6 1.5l4.5 5z" fill="#444"/></svg>
<svg style="left:1907px;top:1068px;" width="12" height="8" viewBox="0 0 12 8"><path d="M1.5 1.5L6 6.5l4.5-5z" fill="#444"/></svg>
</body></html>
